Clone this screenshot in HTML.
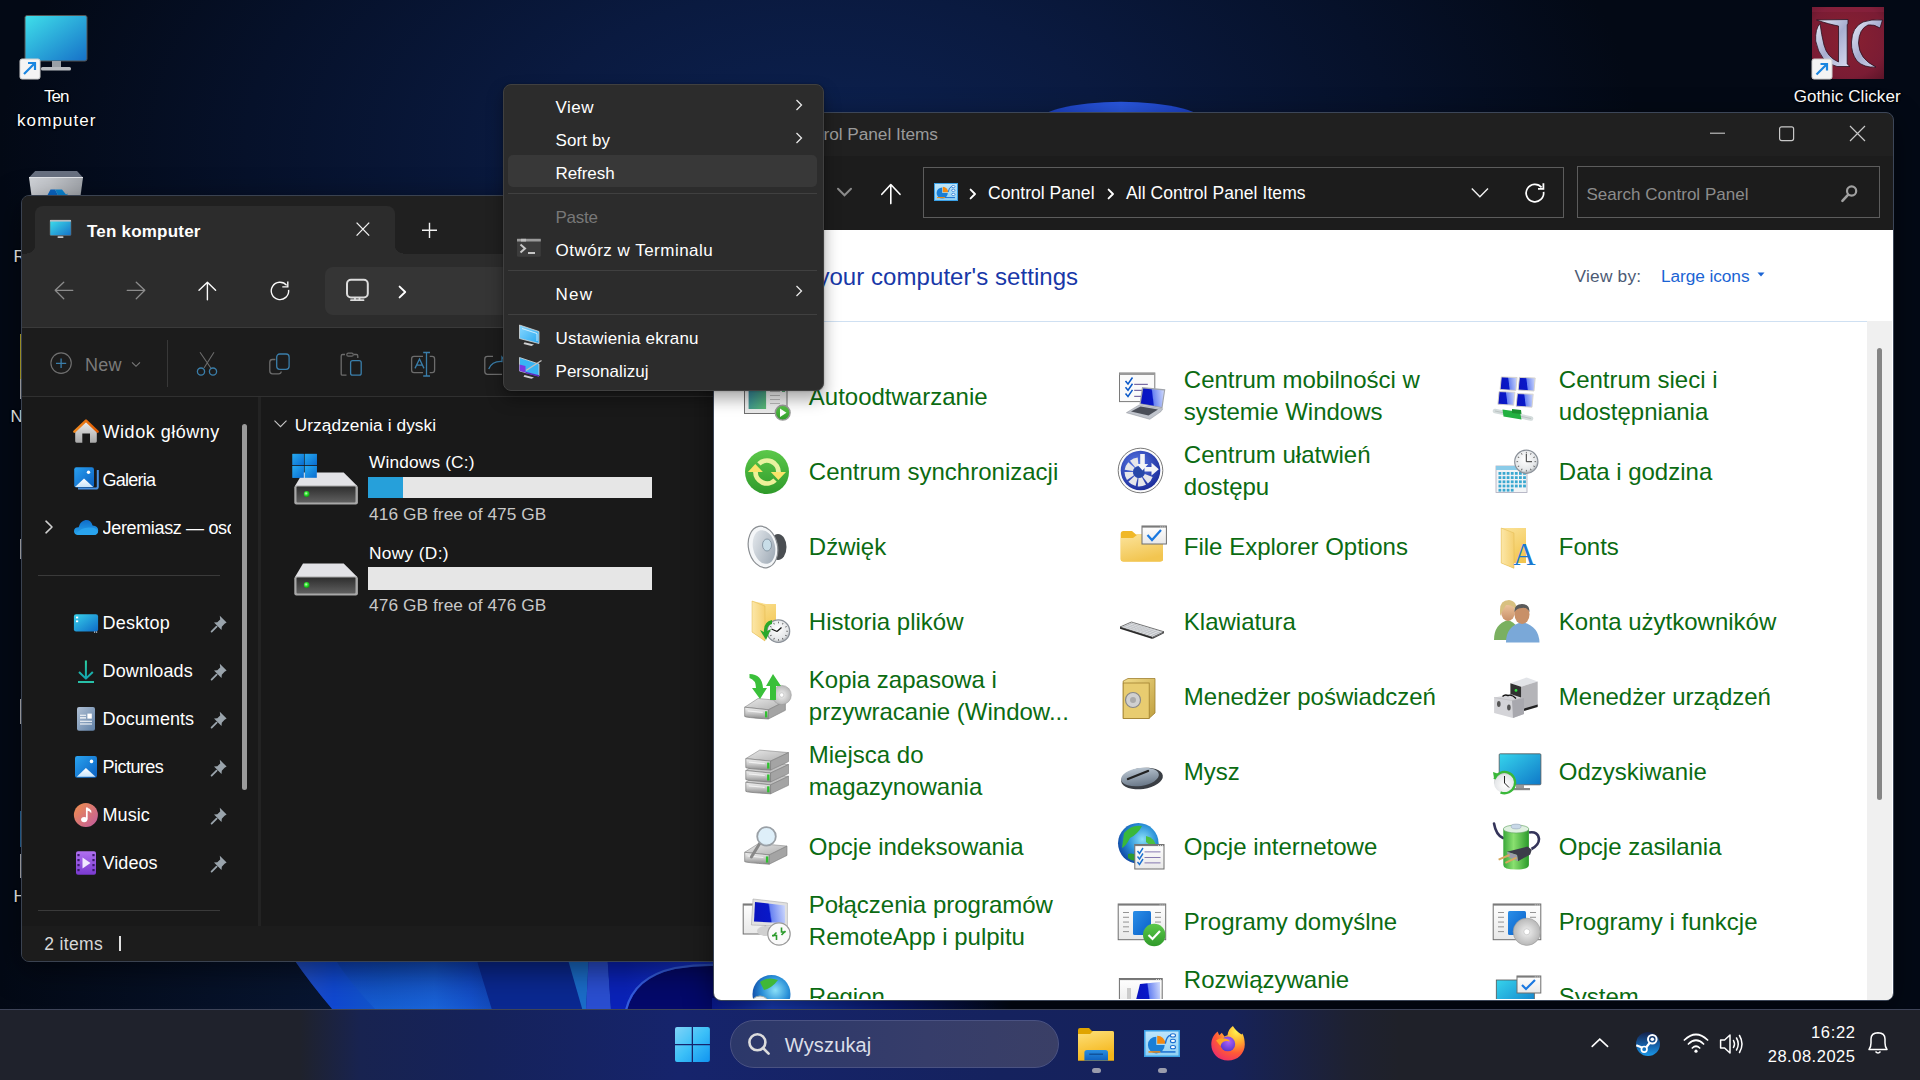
<!DOCTYPE html><html><head><meta charset="utf-8"><style>
*{margin:0;padding:0;box-sizing:border-box}
html,body{width:1920px;height:1080px;overflow:hidden}
body{position:relative;font-family:"Liberation Sans", sans-serif;background:#030915}
.t{position:absolute;line-height:1;white-space:nowrap;font-family:"Liberation Sans", sans-serif}
</style></head><body><div style="position:absolute;left:0px;top:0px;width:1920px;height:1080px;background:radial-gradient(ellipse 820px 460px at 820px 150px,#0c2150 0%,#0a1a40 35%,#06112a 70%,rgba(3,9,21,0) 100%),radial-gradient(ellipse 500px 300px at 500px 1000px,#0a1c40 0%,rgba(3,9,21,0) 100%),#030915"></div>
<svg style="position:absolute;left:280px;top:958px;" width="440" height="52" viewBox="0 0 440 52">
      <defs>
        <linearGradient id="bl1" x1="13" y1="0" x2="215" y2="0" gradientUnits="userSpaceOnUse">
          <stop offset="0" stop-color="#2450c4"/><stop offset="0.2" stop-color="#1048d0"/><stop offset="0.45" stop-color="#1256c8"/><stop offset="0.7" stop-color="#1a62d8"/><stop offset="0.88" stop-color="#1040c0"/><stop offset="1" stop-color="#0a2890"/>
        </linearGradient>
        <linearGradient id="bl2" x1="0" y1="0" x2="0" y2="1"><stop offset="0" stop-color="#0c3aa8"/><stop offset="1" stop-color="#1a66d8"/></linearGradient>
        <linearGradient id="bl3" x1="345" y1="0" x2="440" y2="0" gradientUnits="userSpaceOnUse"><stop offset="0" stop-color="#0a22b8"/><stop offset="1" stop-color="#1838d0"/></linearGradient>
      </defs>
      <path d="M13 0 L440 0 L440 52 L53 52 Q30 25 13 0 Z" fill="#0a2890"/>
      
      <path d="M13 0 L196 0 L212 52 L53 52 Q30 25 13 0 Z" fill="url(#bl1)"/>
      <path d="M54 0 L196 0 L212 52 L96 52 Q70 25 54 0 Z" fill="url(#bl2)" opacity="0.55"/>
      <path d="M287.5 0 L308.75 0 L306 52 L302.5 52 Z" fill="#1a6cc8"/>
      <path d="M308.75 0 L327.5 0 L331 52 L306 52 Z" fill="#2a4ed0"/>
      <path d="M327.5 0 L440 0 L440 52 L331 52 Z" fill="url(#bl3)"/>
      <path d="M347 52 Q355 20 395 11 Q418 7 440 8 L440 52 Z" fill="#04096a"/>
      <path d="M346 52 Q354 19 395 10 Q418 6 440 7" stroke="#3a64e0" stroke-width="2.2" fill="none" opacity="0.9"/>
    </svg>
<div style="position:absolute;left:712px;top:998px;width:300px;height:11px;background:linear-gradient(90deg,#0a1a90 0%,#1a40c0 20%,#0a1a78 60%,rgba(5,10,24,0) 100%)"></div>
<svg style="position:absolute;left:1030px;top:95px;" width="180" height="20" viewBox="0 0 180 20"><defs><linearGradient id="arc" x1="0" y1="0" x2="1" y2="0"><stop offset="0" stop-color="#1a3ec0"/><stop offset="0.5" stop-color="#2a58e0"/><stop offset="1" stop-color="#1a3ec0"/></linearGradient></defs><ellipse cx="91" cy="28.8" rx="86" ry="22" fill="url(#arc)"/></svg>
<svg style="position:absolute;left:18px;top:12px;" width="76" height="70" viewBox="0 0 76 70">
      <defs><linearGradient id="mon" x1="0" y1="0" x2="1" y2="1"><stop offset="0" stop-color="#3fe0ea"/><stop offset="1" stop-color="#1670c8"/></linearGradient></defs>
      <rect x="7" y="3.5" width="62" height="45.5" rx="2" fill="url(#mon)" stroke="#555" stroke-width="1"/>
      <rect x="34" y="49" width="9" height="6" fill="#9aa0a6"/>
      <rect x="23" y="55" width="30" height="3.6" rx="1.5" fill="#b8bcc0"/>
      <rect x="2" y="47" width="20" height="20" rx="2" fill="#f4f4f4" stroke="#cfcfcf"/>
      <path d="M6 62 L17 51 M10 51 L17 51 L17 58" stroke="#1a86e0" stroke-width="2.2" fill="none"/>
    </svg>
<div id="t1" class="t" style="letter-spacing:-0.96px;left:44.0px;top:87.8px;font-size:17px;color:#fff;font-weight:400;text-shadow:0 0 2px #000,0 1px 2px #000">Ten</div>
<div id="t2" class="t" style="letter-spacing:1.09px;left:17.0px;top:112.1px;font-size:17px;color:#fff;font-weight:400;text-shadow:0 0 2px #000,0 1px 2px #000">komputer</div>
<svg style="position:absolute;left:20px;top:160px;" width="80" height="40" viewBox="0 0 80 40">
      <defs><linearGradient id="rb" x1="0" y1="0" x2="1" y2="0"><stop offset="0" stop-color="#d0d3d8"/><stop offset="0.4" stop-color="#c4c7cc"/><stop offset="1" stop-color="#a4a8ae"/></linearGradient></defs>
      <path d="M9 17.5 L15.2 11 L57 11 L63 17.5 Z" fill="#687080"/>
      <path d="M9 17.5 L63 17.5 L60.5 36 L11.5 36 Z" fill="url(#rb)"/>
      <path d="M9 17.5 L63 17.5" stroke="#e4e6ea" stroke-width="1"/>
      <path d="M27 36 L30.5 29.5 L35 29.5 L38.5 36 Z" fill="#0a68c8"/>
      <path d="M35 29.5 L42 29.5 L46 34.5 L48 33.5 L46.5 36 L38.5 36 Z" fill="#0a88d8"/>
    </svg>
<div id="t3" class="t" style="left:13.5px;top:247.8px;font-size:17px;color:#fff;font-weight:400;text-shadow:0 0 2px #000,0 1px 2px #000">R</div>
<div id="t4" class="t" style="left:10.5px;top:407.5px;font-size:17px;color:#fff;font-weight:400;text-shadow:0 0 2px #000,0 1px 2px #000">N</div>
<div id="t5" class="t" style="left:13.5px;top:887.5px;font-size:17px;color:#fff;font-weight:400;text-shadow:0 0 2px #000,0 1px 2px #000">H</div>
<div style="position:absolute;left:20px;top:334px;width:2.5px;height:45px;background:#c8b830"></div>
<div style="position:absolute;left:20px;top:379px;width:2.5px;height:20px;background:#c0c0c4"></div>
<div style="position:absolute;left:20px;top:539px;width:2.5px;height:20px;background:#c0c0c4"></div>
<div style="position:absolute;left:20px;top:699px;width:2.5px;height:25px;background:#c0c0c4"></div>
<div style="position:absolute;left:20px;top:811px;width:2.5px;height:36px;background:#2a70a8"></div>
<div style="position:absolute;left:20px;top:854px;width:2.5px;height:24px;background:#c0c0c4"></div>
<svg style="position:absolute;left:1808px;top:5px;" width="80" height="76" viewBox="0 0 80 76">
      <defs><radialGradient id="gc" cx="0.5" cy="0.45" r="0.75"><stop offset="0" stop-color="#8a2030"/><stop offset="0.7" stop-color="#7a1c34"/><stop offset="1" stop-color="#5a1428"/></radialGradient>
      <linearGradient id="gcs" x1="0" y1="0" x2="1" y2="1"><stop offset="0" stop-color="#e8ecf8"/><stop offset="0.5" stop-color="#a8aed0"/><stop offset="1" stop-color="#d8dcf0"/></linearGradient></defs>
      <rect x="4" y="2" width="72" height="72" fill="url(#gc)"/>
      <rect x="4" y="2" width="72" height="5" fill="#a02a50" opacity="0.25"/>
      <g stroke="#2a1020" stroke-width="0.8" fill="url(#gcs)">
        <path d="M8.5 15 L40 14.5 L40 19 L39.2 19.5 L39.2 59 L42 61.5 L29 61.5 Q12 58 7.7 36 Q7 24 12 18.5 Q13.5 30 16 40 Q19 52 30.5 57 L30.5 21 Q22 19.5 8.5 15 Z"/>
        <path d="M74.5 15 L72 23 Q66 19 60 20 Q51 24 50.5 38 Q51 54 68 62 Q56 63 49 56 Q43 48 43.5 37 Q44 22 55 17 Q63 14 74.5 15 Z"/>
      </g>
      <rect x="4" y="54" width="20" height="20" rx="2" fill="#f4f4f4" stroke="#cfcfcf"/>
      <path d="M8.5 69.5 L19 59 M12.5 59 L19 59 L19 65.5" stroke="#1a86e0" stroke-width="2.2" fill="none"/>
    </svg>
<div id="t6" class="t" style="letter-spacing:0.09px;left:1793.7px;top:88.1px;font-size:17px;color:#fff;font-weight:400;text-shadow:0 0 2px #000,0 1px 2px #000">Gothic Clicker</div>
<div style="position:absolute;left:21px;top:194.5px;width:860px;height:767px;border-radius:8px;background:#202020;border:1px solid #3a4250;overflow:hidden;box-shadow:0 8px 30px rgba(0,0,0,0.5)">
<div style="position:absolute;left:0px;top:-0.5px;width:860px;height:70px;background:#2c2c2c"></div>
<div style="position:absolute;left:0px;top:-0.5px;width:860px;height:58.7px;background:#202020;border-radius:0 0 0 0"></div>
<div style="position:absolute;left:13px;top:10.5px;width:360px;height:60px;background:#2c2c2c;border-radius:8px 8px 0 0"></div>
<div style="position:absolute;left:5px;top:49.5px;width:8px;height:9px;background:radial-gradient(circle at 0 0,#202020 8px,#2c2c2c 8.5px)"></div>
<div style="position:absolute;left:373px;top:49.5px;width:8px;height:9px;background:radial-gradient(circle at 100% 0,#202020 8px,#2c2c2c 8.5px)"></div>
<div style="position:absolute;left:0px;top:58.19999999999999px;width:860px;height:73.5px;background:#2c2c2c"></div>
<div style="position:absolute;left:0px;top:131.3px;width:860px;height:1px;background:#3a3a3a"></div>
<div style="position:absolute;left:303px;top:71.30000000000001px;width:560px;height:48px;background:#353535;border-radius:8px"></div>
<div style="position:absolute;left:0px;top:132.3px;width:860px;height:68.5px;background:#1c1c1c"></div>
<div style="position:absolute;left:0px;top:200.3px;width:860px;height:1.6px;background:#303030"></div>
<div style="position:absolute;left:0px;top:201.5px;width:860px;height:529px;background:#191919"></div>
<div style="position:absolute;left:236px;top:201.5px;width:3px;height:529px;background:#232323"></div>
<div style="position:absolute;left:220px;top:228.5px;width:5px;height:366px;background:#9a9a9a;border-radius:3px"></div>
<div style="position:absolute;left:16px;top:379.0px;width:182px;height:1.2px;background:#3a3a3a"></div>
<div style="position:absolute;left:16px;top:714.5px;width:182px;height:1.2px;background:#3a3a3a"></div>
<div style="position:absolute;left:0px;top:730.3px;width:860px;height:36px;background:#1c1c1c"></div>
<div style="position:absolute;left:97px;top:740.1px;width:2px;height:15px;background:#e0e0e0"></div>
<div style="position:absolute;left:346.3px;top:281.0px;width:283.7px;height:21.7px;background:#e6e6e6"></div>
<div style="position:absolute;left:346.3px;top:281.0px;width:34.7px;height:21.7px;background:#26a0da"></div>
<div style="position:absolute;left:346.3px;top:371.79999999999995px;width:283.7px;height:22.4px;background:#e6e6e6"></div>
</div>
<div id="t7" class="t" style="letter-spacing:0.21px;left:87.0px;top:223.2px;font-size:17px;color:#fff;font-weight:700;">Ten komputer</div>
<div id="t8" class="t" style="letter-spacing:0.52px;left:102.6px;top:422.6px;font-size:18px;color:#fff;font-weight:400;">Widok główny</div>
<div id="t9" class="t" style="letter-spacing:-0.76px;left:102.6px;top:470.6px;font-size:18px;color:#fff;font-weight:400;">Galeria</div>
<div id="t10" class="t" style="left:102.6px;top:518.8px;font-size:18px;color:#fff;font-weight:400;width:128px;overflow:hidden;letter-spacing:-0.35px">Jeremiasz — osc</div>
<div id="t11" class="t" style="letter-spacing:0.18px;left:102.6px;top:614.4px;font-size:18px;color:#fff;font-weight:400;">Desktop</div>
<div id="t12" class="t" style="letter-spacing:0.13px;left:102.6px;top:662.4px;font-size:18px;color:#fff;font-weight:400;">Downloads</div>
<div id="t13" class="t" style="letter-spacing:0.06px;left:102.6px;top:710.4px;font-size:18px;color:#fff;font-weight:400;">Documents</div>
<div id="t14" class="t" style="letter-spacing:-0.55px;left:102.6px;top:758.4px;font-size:18px;color:#fff;font-weight:400;">Pictures</div>
<div id="t15" class="t" style="letter-spacing:0.02px;left:102.6px;top:806.4px;font-size:18px;color:#fff;font-weight:400;">Music</div>
<div id="t16" class="t" style="letter-spacing:0.04px;left:102.6px;top:854.4px;font-size:18px;color:#fff;font-weight:400;">Videos</div>
<div id="t17" class="t" style="letter-spacing:0.07px;left:294.7px;top:416.9px;font-size:17.3px;color:#fff;font-weight:400;">Urządzenia i dyski</div>
<div id="t18" class="t" style="letter-spacing:0.16px;left:369.0px;top:453.6px;font-size:17.3px;color:#fff;font-weight:400;">Windows (C:)</div>
<div id="t19" class="t" style="letter-spacing:0.08px;left:369.0px;top:506.0px;font-size:17.3px;color:#c8c8c8;font-weight:400;">416 GB free of 475 GB</div>
<div id="t20" class="t" style="letter-spacing:0.34px;left:369.0px;top:545.0px;font-size:17.3px;color:#fff;font-weight:400;">Nowy (D:)</div>
<div id="t21" class="t" style="letter-spacing:0.08px;left:369.0px;top:597.4px;font-size:17.3px;color:#c8c8c8;font-weight:400;">476 GB free of 476 GB</div>
<div id="t22" class="t" style="letter-spacing:0.24px;left:84.9px;top:355.5px;font-size:18px;color:#7a7a7a;font-weight:400;">New</div>
<div id="t23" class="t" style="letter-spacing:0.35px;left:44.2px;top:936.2px;font-size:17.5px;color:#d8d8d8;font-weight:400;">2 items</div>
<svg style="position:absolute;left:48px;top:218px;" width="26" height="22" viewBox="0 0 26 22">
      <defs><linearGradient id="tmon" x1="0" y1="0" x2="1" y2="1"><stop offset="0" stop-color="#3ee0ec"/><stop offset="1" stop-color="#1672c8"/></linearGradient></defs>
      <rect x="2" y="2" width="21" height="15.5" rx="1" fill="url(#tmon)" stroke="#6a6a6a" stroke-width="0.6"/>
      <rect x="2" y="2" width="21" height="1.6" fill="#b8bcc0"/>
      <rect x="9.5" y="18.3" width="6" height="1.7" rx="0.8" fill="#c8c8c8"/>
    </svg>
<svg style="position:absolute;left:350px;top:216px;" width="26" height="26" viewBox="0 0 26 26"><path d="M6.6 6.6 L19.2 19.6 M19.2 6.6 L6.6 19.6" stroke="#f2f2f2" stroke-width="1.3" fill="none"/></svg>
<svg style="position:absolute;left:416px;top:216px;" width="28" height="28" viewBox="0 0 28 28"><path d="M13.5 6.8 L13.5 22 M6 14.3 L21 14.3" stroke="#f2f2f2" stroke-width="1.4" fill="none"/></svg>
<svg style="position:absolute;left:50px;top:276px;" width="30" height="30" viewBox="0 0 30 30"><path d="M5.2 14.3 L22.8 14.3 M13.75 6.2 L5.2 14.3 L13.75 22.75" stroke="#8c8c8c" stroke-width="1.3" fill="none" stroke-linecap="round" stroke-linejoin="round"/></svg>
<svg style="position:absolute;left:122px;top:276px;" width="30" height="30" viewBox="0 0 30 30"><path d="M5.2 14.3 L22.8 14.3 M14.25 6.2 L22.8 14.3 L14.25 22.75" stroke="#8c8c8c" stroke-width="1.3" fill="none" stroke-linecap="round" stroke-linejoin="round"/></svg>
<svg style="position:absolute;left:193px;top:276px;" width="30" height="30" viewBox="0 0 30 30"><path d="M14.4 6.4 L14.4 23.7 M6 14.3 L14.4 6.2 L22.6 14.3" stroke="#fafafa" stroke-width="1.4" fill="none" stroke-linecap="round" stroke-linejoin="round"/></svg>
<svg style="position:absolute;left:266px;top:276px;" width="30" height="30" viewBox="0 0 30 30"><path d="M20.7 9.4 A8.7 8.7 0 1 0 22.6 13.9" stroke="#fafafa" stroke-width="1.4" fill="none"/><path d="M16.3 10.9 L21.8 10.9 L21.8 5.4" stroke="#fafafa" stroke-width="1.4" fill="none"/></svg>
<svg style="position:absolute;left:340px;top:274px;" width="36" height="32" viewBox="0 0 36 32">
      <rect x="7" y="5.8" width="20.8" height="17.6" rx="4" stroke="#dcdcdc" stroke-width="2" fill="none"/>
      <path d="M15 23.4 L15 26 M19.5 23.4 L19.5 26" stroke="#dcdcdc" stroke-width="1.8"/>
      <path d="M11 26.2 L23.5 26.2" stroke="#dcdcdc" stroke-width="1.8" stroke-linecap="round"/>
    </svg>
<svg style="position:absolute;left:394px;top:282px;" width="18" height="20" viewBox="0 0 18 20"><path d="M5.6 4.6 L11.2 10 L5.6 15.4" stroke="#fff" stroke-width="1.9" fill="none" stroke-linecap="round" stroke-linejoin="round"/></svg>
<svg style="position:absolute;left:48px;top:350px;" width="28" height="28" viewBox="0 0 28 28"><circle cx="13.1" cy="13.1" r="10.2" stroke="#707070" stroke-width="1.15" fill="none"/><path d="M13.1 8.5 L13.1 18 M8 13.3 L18.2 13.3" stroke="#3a7eaa" stroke-width="1.3"/></svg>
<svg style="position:absolute;left:128px;top:358px;" width="16" height="14" viewBox="0 0 16 14"><path d="M4 4.3 L8 8.3 L12 4.3" stroke="#7a7a7a" stroke-width="1.1" fill="none"/></svg>
<div style="position:absolute;left:166.5px;top:340px;width:1.3px;height:47.4px;background:#383838"></div>
<svg style="position:absolute;left:194px;top:348px;" width="26" height="30" viewBox="0 0 26 30">
      <path d="M6 4.3 L16.8 20 M20 4.3 L10 20" stroke="#6c6c6c" stroke-width="1.1" fill="none"/>
      <circle cx="7" cy="23.6" r="3.6" stroke="#3a7eaa" stroke-width="1.3" fill="none"/>
      <circle cx="19" cy="23.6" r="3.6" stroke="#3a7eaa" stroke-width="1.3" fill="none"/>
    </svg>
<svg style="position:absolute;left:265px;top:350px;" width="30" height="28" viewBox="0 0 30 28">
      <path d="M10.4 9.5 L7.5 9.5 Q4.8 9.5 4.8 12.2 L4.8 21 Q4.8 23.8 7.5 23.8 L13.5 23.8 Q16 23.8 16.3 21.5" stroke="#6c6c6c" stroke-width="1.3" fill="none"/>
      <rect x="11.7" y="4" width="12.4" height="15.3" rx="3" stroke="#3a7eaa" stroke-width="1.3" fill="none"/>
    </svg>
<svg style="position:absolute;left:336px;top:348px;" width="30" height="30" viewBox="0 0 30 30">
      <path d="M9 6.5 L6.5 6.5 Q5.2 6.5 5.2 8 L5.2 26.2 Q5.2 27.2 6.5 27.2 L10.5 27.2 M18 6.5 L20.5 6.5 Q21.8 6.5 21.8 8 L21.8 10" stroke="#6c6c6c" stroke-width="1.3" fill="none"/>
      <rect x="10.8" y="5.2" width="6.5" height="3" rx="1.5" stroke="#6c6c6c" stroke-width="1.2" fill="none"/>
      <rect x="14.6" y="12.6" width="10.6" height="14.6" rx="2" stroke="#3a7eaa" stroke-width="1.3" fill="none"/>
    </svg>
<svg style="position:absolute;left:408px;top:348px;" width="30" height="32" viewBox="0 0 30 32">
      <path d="M15 8.4 L6 8.4 Q3.6 8.4 3.6 11 L3.6 22 Q3.6 24.6 6 24.6 L15 24.6 M21.7 8.4 L24.2 8.4 Q26.6 8.4 26.6 11 L26.6 22 Q26.6 24.6 24.2 24.6 L21.7 24.6" stroke="#6c6c6c" stroke-width="1.3" fill="none"/>
      <path d="M7 20.4 L11.5 11 L16 20.4 M8.6 17.2 L14.4 17.2" stroke="#3a7eaa" stroke-width="1.3" fill="none"/>
      <path d="M18.5 4.5 L18.5 28 M15.2 4.5 L22 4.5 M15.2 28 L22 28" stroke="#3a7eaa" stroke-width="1.3" fill="none"/>
    </svg>
<svg style="position:absolute;left:480px;top:348px;" width="24" height="32" viewBox="0 0 24 32">
      <path d="M13 8.4 L7.5 8.4 Q4.8 8.4 4.8 11 L4.8 23.6 Q4.8 26.3 7.5 26.3 L22 26.3" stroke="#6c6c6c" stroke-width="1.3" fill="none"/>
      <path d="M8.7 21 Q12 13 22 13.5 L22 9 L26 14" stroke="#3a7eaa" stroke-width="1.3" fill="none"/>
    </svg>
<svg style="position:absolute;left:72px;top:418px;" width="28" height="28" viewBox="0 0 28 28">
      <defs><linearGradient id="hb" x1="0" y1="0" x2="0" y2="1"><stop offset="0" stop-color="#ececec"/><stop offset="1" stop-color="#a8a8a8"/></linearGradient>
      <linearGradient id="hr" x1="0" y1="0" x2="1" y2="0"><stop offset="0" stop-color="#f08a20"/><stop offset="1" stop-color="#e05a00"/></linearGradient></defs>
      <path d="M3.2 13.5 L14 3.4 L24.8 13.5 L24.8 23.3 Q24.8 24.7 23.4 24.7 L18 24.7 L18 15.4 L10.3 15.4 L10.3 24.7 L4.6 24.7 Q3.2 24.7 3.2 23.3 Z" fill="url(#hb)"/>
      <path d="M2.4 13.6 L14 2.6 L25.6 13.6" stroke="url(#hr)" stroke-width="2.6" fill="none" stroke-linejoin="round" stroke-linecap="round"/>
    </svg>
<svg style="position:absolute;left:72px;top:465px;" width="28" height="28" viewBox="0 0 28 28">
      <defs><linearGradient id="gal" x1="0" y1="0" x2="1" y2="1"><stop offset="0" stop-color="#29a0f0"/><stop offset="1" stop-color="#0a5ec0"/></linearGradient>
      <linearGradient id="mnt" x1="0" y1="0" x2="0" y2="1"><stop offset="0" stop-color="#ffffff"/><stop offset="1" stop-color="#c8e4fa"/></linearGradient></defs>
      <path d="M6 23.6 L24 23.6 Q25.8 23.6 25.8 21.8 L25.8 5" stroke="#4a90e0" stroke-width="2" fill="none"/>
      <rect x="2.2" y="2.2" width="19.8" height="20.2" rx="2.2" fill="url(#gal)"/>
      <path d="M3 22 L12 13.6 L21.2 22 Z" fill="url(#mnt)"/>
      <circle cx="16.5" cy="7.2" r="1.7" fill="#fff"/>
    </svg>
<svg style="position:absolute;left:72px;top:516px;" width="28" height="22" viewBox="0 0 28 22">
      <defs><linearGradient id="cld" x1="0" y1="0" x2="0" y2="1"><stop offset="0" stop-color="#0f6cc8"/><stop offset="1" stop-color="#28a8f0"/></linearGradient></defs>
      <path d="M6.5 19 Q2 19 2 15.3 Q2 11.3 6.6 11.2 Q8 5.2 13.5 4 Q18.8 3.6 20.6 9.4 Q26.2 9.8 26.2 14.6 Q26.2 19 21.5 19 Z" fill="url(#cld)"/>
      <path d="M4.3 17.5 Q10 10 21 11.8 Q25 12.8 26 15.5 Q25.4 19 21.5 19 L6.5 19 Q4.8 19 4.3 17.5 Z" fill="#2aa4ee" opacity="0.9"/>
    </svg>
<svg style="position:absolute;left:42px;top:518px;" width="14" height="18" viewBox="0 0 14 18"><path d="M4 3.2 L10 9 L4 14.8" stroke="#cfcfcf" stroke-width="1.6" fill="none" stroke-linecap="round" stroke-linejoin="round"/></svg>
<svg style="position:absolute;left:72px;top:612px;" width="28" height="22" viewBox="0 0 28 22">
      <defs><linearGradient id="dsk" x1="0" y1="0" x2="1" y2="1"><stop offset="0" stop-color="#38d0ea"/><stop offset="1" stop-color="#0d6ac6"/></linearGradient></defs>
      <rect x="1.9" y="2.2" width="24.2" height="17.3" rx="2.2" fill="url(#dsk)"/>
      <rect x="4" y="4.6" width="2.2" height="1.8" fill="#fff"/><rect x="4" y="8.4" width="2.2" height="1.8" fill="#fff"/>
      <rect x="22" y="19.5" width="1.2" height="1.2" fill="#cde"/><rect x="24" y="19.5" width="1.2" height="1.2" fill="#cde"/>
    </svg>
<svg style="position:absolute;left:72px;top:656px;" width="28" height="30" viewBox="0 0 28 30">
      <defs><linearGradient id="dl" x1="0" y1="0" x2="0" y2="1"><stop offset="0" stop-color="#2cd0a0"/><stop offset="1" stop-color="#12a4b0"/></linearGradient></defs>
      <path d="M13.9 4.5 L13.9 22 M7 16 L13.9 22.6 L20.8 16" stroke="url(#dl)" stroke-width="2" fill="none" stroke-linejoin="round"/>
      <path d="M6 26 L22 26" stroke="#28c0a8" stroke-width="2"/>
    </svg>
<svg style="position:absolute;left:72px;top:704px;" width="28" height="30" viewBox="0 0 28 30">
      <defs><linearGradient id="doc" x1="0" y1="0" x2="1" y2="1"><stop offset="0" stop-color="#b0c0d4"/><stop offset="1" stop-color="#5f80a6"/></linearGradient></defs>
      <rect x="5" y="3" width="18" height="23.7" rx="2" fill="url(#doc)"/>
      <path d="M8 11.2 L14 11.2 M8 13.9 L14 13.9 M8 17.3 L20 17.3 M8 20 L20 20" stroke="#fff" stroke-width="1.1"/>
      <rect x="15.4" y="9.6" width="4.4" height="5" fill="#fff"/>
    </svg>
<svg style="position:absolute;left:72px;top:752px;" width="28" height="28" viewBox="0 0 28 28">
      <defs><linearGradient id="pic" x1="0" y1="0" x2="1" y2="1"><stop offset="0" stop-color="#2aa4f0"/><stop offset="1" stop-color="#0a5ec0"/></linearGradient></defs>
      <rect x="3" y="4" width="22" height="21.7" rx="2.2" fill="url(#pic)"/>
      <path d="M4.8 24.7 L13.9 16 L23.5 24.7 Z" fill="url(#mnt)"/>
      <circle cx="19.5" cy="9.4" r="1.8" fill="#fff"/>
    </svg>
<svg style="position:absolute;left:72px;top:801px;" width="28" height="28" viewBox="0 0 28 28">
      <defs><linearGradient id="mus" x1="0" y1="0" x2="1" y2="1"><stop offset="0" stop-color="#f0904a"/><stop offset="1" stop-color="#c05aa0"/></linearGradient></defs>
      <circle cx="13.9" cy="14" r="12" fill="url(#mus)"/>
      <path d="M14.8 6.5 L14.8 18.5" stroke="#fff" stroke-width="1.7"/>
      <path d="M14.8 6.5 Q18 7.2 19.3 9.8 L19.3 12.3 Q17.5 9.6 14.8 9.4 Z" fill="#fff"/>
      <ellipse cx="12.2" cy="18.6" rx="3.1" ry="2.7" fill="#fff"/>
    </svg>
<svg style="position:absolute;left:72px;top:848px;" width="28" height="30" viewBox="0 0 28 30">
      <defs><linearGradient id="vid" x1="0" y1="0" x2="0" y2="1"><stop offset="0" stop-color="#b070f0"/><stop offset="1" stop-color="#7a3ad0"/></linearGradient></defs>
      <rect x="4" y="3.2" width="20" height="23.5" rx="2" fill="url(#vid)"/>
      <g fill="#3a1a6a"><rect x="5.4" y="6" width="2.2" height="2.2"/><rect x="5.4" y="11" width="2.2" height="2.2"/><rect x="5.4" y="16" width="2.2" height="2.2"/><rect x="5.4" y="21" width="2.2" height="2.2"/>
      <rect x="20.4" y="6" width="2.2" height="2.2"/><rect x="20.4" y="11" width="2.2" height="2.2"/><rect x="20.4" y="16" width="2.2" height="2.2"/><rect x="20.4" y="21" width="2.2" height="2.2"/></g>
      <path d="M10.5 9.5 L18.5 15 L10.5 20.5 Z" fill="#f0e8ff"/>
    </svg>
<svg style="position:absolute;left:208px;top:613px;" width="22" height="20" viewBox="0 0 22 20">
          <path d="M11.8 2.8 L18.6 9.6 L16.6 10.8 L13.8 13.7 L13.5 17 L6 9.5 L9.3 9.2 L12.2 6.4 Z" fill="#9aa4ac"/>
          <path d="M8.6 13.6 L3.6 18.6" stroke="#9aa4ac" stroke-width="1.8" stroke-linecap="round"/>
        </svg>
<svg style="position:absolute;left:208px;top:661px;" width="22" height="20" viewBox="0 0 22 20">
          <path d="M11.8 2.8 L18.6 9.6 L16.6 10.8 L13.8 13.7 L13.5 17 L6 9.5 L9.3 9.2 L12.2 6.4 Z" fill="#9aa4ac"/>
          <path d="M8.6 13.6 L3.6 18.6" stroke="#9aa4ac" stroke-width="1.8" stroke-linecap="round"/>
        </svg>
<svg style="position:absolute;left:208px;top:709px;" width="22" height="20" viewBox="0 0 22 20">
          <path d="M11.8 2.8 L18.6 9.6 L16.6 10.8 L13.8 13.7 L13.5 17 L6 9.5 L9.3 9.2 L12.2 6.4 Z" fill="#9aa4ac"/>
          <path d="M8.6 13.6 L3.6 18.6" stroke="#9aa4ac" stroke-width="1.8" stroke-linecap="round"/>
        </svg>
<svg style="position:absolute;left:208px;top:757px;" width="22" height="20" viewBox="0 0 22 20">
          <path d="M11.8 2.8 L18.6 9.6 L16.6 10.8 L13.8 13.7 L13.5 17 L6 9.5 L9.3 9.2 L12.2 6.4 Z" fill="#9aa4ac"/>
          <path d="M8.6 13.6 L3.6 18.6" stroke="#9aa4ac" stroke-width="1.8" stroke-linecap="round"/>
        </svg>
<svg style="position:absolute;left:208px;top:805px;" width="22" height="20" viewBox="0 0 22 20">
          <path d="M11.8 2.8 L18.6 9.6 L16.6 10.8 L13.8 13.7 L13.5 17 L6 9.5 L9.3 9.2 L12.2 6.4 Z" fill="#9aa4ac"/>
          <path d="M8.6 13.6 L3.6 18.6" stroke="#9aa4ac" stroke-width="1.8" stroke-linecap="round"/>
        </svg>
<svg style="position:absolute;left:208px;top:853px;" width="22" height="20" viewBox="0 0 22 20">
          <path d="M11.8 2.8 L18.6 9.6 L16.6 10.8 L13.8 13.7 L13.5 17 L6 9.5 L9.3 9.2 L12.2 6.4 Z" fill="#9aa4ac"/>
          <path d="M8.6 13.6 L3.6 18.6" stroke="#9aa4ac" stroke-width="1.8" stroke-linecap="round"/>
        </svg>
<svg style="position:absolute;left:270px;top:416px;" width="20" height="16" viewBox="0 0 20 16"><path d="M4.5 4.6 L10.5 10.6 L16.5 4.6" stroke="#c8c8c8" stroke-width="1.1" fill="none"/></svg>
<svg style="position:absolute;left:290px;top:452px;" width="30" height="28" viewBox="0 0 30 28">
      <defs><linearGradient id="wl" x1="0" y1="0" x2="1" y2="1"><stop offset="0" stop-color="#26aaf0"/><stop offset="1" stop-color="#0a6cd0"/></linearGradient></defs>
      <rect x="2.5" y="1.9" width="11.3" height="11.2" fill="url(#wl)"/><rect x="14.8" y="1.9" width="12" height="11.2" fill="url(#wl)"/>
      <rect x="2.5" y="14" width="11.3" height="11.8" fill="url(#wl)"/><rect x="14.8" y="14" width="12" height="11.8" fill="url(#wl)"/>
    </svg>
<svg style="position:absolute;left:286px;top:472px;" width="80" height="34" viewBox="0 0 80 34">
      <defs>
        <linearGradient id="dfront472" x1="0" y1="0" x2="0" y2="1"><stop offset="0" stop-color="#2e2e2e"/><stop offset="1" stop-color="#606060"/></linearGradient>
        <radialGradient id="led472" cx="0.4" cy="0.4" r="0.6"><stop offset="0" stop-color="#c8ffc0"/><stop offset="0.5" stop-color="#30e030"/><stop offset="1" stop-color="#10a010"/></radialGradient>
      </defs>
      <path d="M9 14 L17 0.4 L57.7 0.4 L71.3 14 Z" fill="#e2e2e6"/>
      <rect x="8.3" y="13.6" width="63.6" height="19" rx="2" fill="#a8a8a8"/>
      <rect x="10.5" y="14.6" width="59" height="16" rx="1" fill="url(#dfront472)"/>
      <circle cx="20.7" cy="22" r="2.9" fill="url(#led472)"/>
    </svg>
<svg style="position:absolute;left:286px;top:563px;" width="80" height="34" viewBox="0 0 80 34">
      <defs>
        <linearGradient id="dfront563" x1="0" y1="0" x2="0" y2="1"><stop offset="0" stop-color="#2e2e2e"/><stop offset="1" stop-color="#606060"/></linearGradient>
        <radialGradient id="led563" cx="0.4" cy="0.4" r="0.6"><stop offset="0" stop-color="#c8ffc0"/><stop offset="0.5" stop-color="#30e030"/><stop offset="1" stop-color="#10a010"/></radialGradient>
      </defs>
      <path d="M9 14 L17 0.4 L57.7 0.4 L71.3 14 Z" fill="#e2e2e6"/>
      <rect x="8.3" y="13.6" width="63.6" height="19" rx="2" fill="#a8a8a8"/>
      <rect x="10.5" y="14.6" width="59" height="16" rx="1" fill="url(#dfront563)"/>
      <circle cx="20.7" cy="22" r="2.9" fill="url(#led563)"/>
    </svg>
<svg style="position:absolute;left:290px;top:452px;" width="30" height="28" viewBox="0 0 30 28">
      <rect x="2.5" y="1.9" width="11.3" height="11.2" fill="url(#wl)"/><rect x="14.8" y="1.9" width="12" height="11.2" fill="url(#wl)"/>
      <rect x="2.5" y="14" width="11.3" height="11.8" fill="url(#wl)"/><rect x="14.8" y="14" width="12" height="11.8" fill="url(#wl)"/>
    </svg>
<div style="position:absolute;left:712.5px;top:111.5px;width:1181px;height:889px;border-radius:8px;border:1px solid #3c4658;background:#202020;overflow:hidden;box-shadow:0 8px 30px rgba(0,0,0,0.45)">
<div style="position:absolute;left:0.0px;top:43.30000000000001px;width:1180px;height:74px;background:#1c1c1c"></div>
<div style="position:absolute;left:209.0px;top:54.099999999999994px;width:641px;height:51.6px;border:1px solid #5c5c5c;background:#1c1c1c"></div>
<div style="position:absolute;left:863.0px;top:53.69999999999999px;width:303.3px;height:52px;border:1px solid #5c5c5c;background:#1c1c1c"></div>
<div style="position:absolute;left:0.0px;top:117.1px;width:1180px;height:771px;background:#fff"></div>
<div style="position:absolute;left:0.0px;top:208.0px;width:1154px;height:1.3px;background:#cfe0f2"></div>
<div style="position:absolute;left:1153.9px;top:208.5px;width:25px;height:680px;background:#f0f0f0"></div>
<div style="position:absolute;left:1163.7px;top:235.5px;width:5px;height:452px;background:#858585;border-radius:3px"></div>
</div>
<svg style="position:absolute;left:1705px;top:125px;" width="26" height="18" viewBox="0 0 26 18"><path d="M5 8.2 L20 8.2" stroke="#c8c8c8" stroke-width="1.1"/></svg>
<svg style="position:absolute;left:1775px;top:122px;" width="24" height="24" viewBox="0 0 24 24"><rect x="4.6" y="4.8" width="14" height="13.8" rx="2" stroke="#c8c8c8" stroke-width="1.2" fill="none"/></svg>
<svg style="position:absolute;left:1845px;top:121px;" width="26" height="26" viewBox="0 0 26 26"><path d="M5 5 L20 20 M20 5 L5 20" stroke="#c8c8c8" stroke-width="1.2" fill="none"/></svg>
<svg style="position:absolute;left:834px;top:184px;" width="20" height="16" viewBox="0 0 20 16"><path d="M4 4.8 L10.5 11.3 L17 4.8" stroke="#8a8a8a" stroke-width="2" fill="none" stroke-linecap="round"/></svg>
<svg style="position:absolute;left:876px;top:180px;" width="30" height="28" viewBox="0 0 30 28"><path d="M14.8 5 L14.8 23.6 M5.8 14.3 L14.8 4.5 L24 14.3" stroke="#fff" stroke-width="1.6" fill="none" stroke-linecap="round" stroke-linejoin="round"/></svg>
<svg style="position:absolute;left:934px;top:183px;" width="24" height="18" viewBox="0 0 24 18">
  <defs><linearGradient id="cpbga" x1="0" y1="0" x2="0" y2="1"><stop offset="0" stop-color="#bfe6fb"/><stop offset="1" stop-color="#8fd0f4"/></linearGradient></defs>
  <rect x="0.5" y="0.5" width="23" height="17" fill="url(#cpbga)" stroke="#3aa0e6" stroke-width="1"/>
  <path d="M8.2 4.4 A5.6 5.6 0 1 0 13.8 10 L8.2 10 Z" fill="#1a7ed6"/>
  <path d="M8.8 3.8 A5.4 5.4 0 0 1 14.2 9.2 L8.8 9.2 Z" fill="#f28a12"/>
  <path d="M14.2 9 Q15.2 4 17.5 3.6 L18.5 3.6" stroke="#1a6ed0" stroke-width="0.9" fill="none"/>
  <ellipse cx="19.3" cy="3.6" rx="1.7" ry="1.1" fill="#fff" stroke="#1a6ed0" stroke-width="0.7"/>
  <ellipse cx="19.3" cy="7.3" rx="1.7" ry="1.1" fill="#fff" stroke="#1a6ed0" stroke-width="0.7"/>
  <ellipse cx="19.3" cy="11.4" rx="1.7" ry="1.1" fill="#fff" stroke="#1a6ed0" stroke-width="0.7"/>
  <path d="M3 14.6 L11 14.6" stroke="#f28a12" stroke-width="1"/><path d="M11 14.6 L21 14.6" stroke="#1a6ed0" stroke-width="1"/>
</svg>
<svg style="position:absolute;left:966px;top:186px;" width="14" height="16" viewBox="0 0 14 16"><path d="M4.6 3.6 L9 8 L4.6 12.4" stroke="#fff" stroke-width="1.9" fill="none" stroke-linecap="round" stroke-linejoin="round"/></svg>
<svg style="position:absolute;left:1104px;top:186px;" width="14" height="16" viewBox="0 0 14 16"><path d="M4.6 3.6 L9 8 L4.6 12.4" stroke="#fff" stroke-width="1.9" fill="none" stroke-linecap="round" stroke-linejoin="round"/></svg>
<svg style="position:absolute;left:1468px;top:184px;" width="24" height="20" viewBox="0 0 24 20"><path d="M3.8 4.4 L11.9 12.8 L20 4.4" stroke="#f0f0f0" stroke-width="1.4" fill="none"/></svg>
<svg style="position:absolute;left:1520px;top:178px;" width="30" height="30" viewBox="0 0 30 30"><path d="M21.6 9.4 A8.75 8.75 0 1 0 23.6 13.9" stroke="#fff" stroke-width="1.7" fill="none"/><path d="M18 10.8 L23.4 10.8 L23.4 5.3" stroke="#fff" stroke-width="1.8" fill="none"/></svg>
<svg style="position:absolute;left:1838px;top:182px;" width="24" height="24" viewBox="0 0 24 24"><circle cx="13.6" cy="9" r="4.6" stroke="#a0a0a0" stroke-width="2.2" fill="none"/><path d="M10.2 12.6 L4.4 18.8" stroke="#a0a0a0" stroke-width="2.6" stroke-linecap="round"/></svg>
<svg style="position:absolute;left:1754px;top:268px;" width="14" height="12" viewBox="0 0 14 12"><path d="M3.5 4.5 L10.5 4.5 L7 8.5 Z" fill="#1b64d4"/></svg>
<div id="t24" class="t" style="letter-spacing:-0.06px;left:763.5px;top:125.9px;font-size:17.3px;color:#9a9a9a;font-weight:400;">All Control Panel Items</div>
<div id="t25" class="t" style="letter-spacing:0.04px;left:988.0px;top:184.8px;font-size:17.5px;color:#fff;font-weight:400;">Control Panel</div>
<div id="t26" class="t" style="letter-spacing:0.07px;left:1126.0px;top:184.8px;font-size:17.5px;color:#fff;font-weight:400;">All Control Panel Items</div>
<div id="t27" class="t" style="letter-spacing:0.02px;left:1586.5px;top:185.8px;font-size:17px;color:#8c8c8c;font-weight:400;">Search Control Panel</div>
<div id="t28" class="t" style="letter-spacing:0.06px;left:743.6px;top:264.8px;font-size:24px;color:#1838a8;font-weight:400;">Adjust your computer's settings</div>
<div id="t29" class="t" style="letter-spacing:0.21px;left:1574.6px;top:267.8px;font-size:17.3px;color:#4c5a74;font-weight:400;">View by:</div>
<div id="t30" class="t" style="letter-spacing:-0.08px;left:1661.0px;top:267.8px;font-size:17.3px;color:#1b64d4;font-weight:400;">Large icons</div>
<div style="position:absolute;left:714px;top:322px;width:1153px;height:677px;overflow:hidden">
<div id="t31" class="t" style="left:94.8px;top:62.6px;font-size:24px;color:#0b6b12;font-weight:400;">Autoodtwarzanie</div>
<div id="t32" class="t" style="left:469.8px;top:46.2px;font-size:24px;color:#0b6b12;font-weight:400;">Centrum mobilności w</div>
<div id="t33" class="t" style="left:469.8px;top:78.4px;font-size:24px;color:#0b6b12;font-weight:400;">systemie Windows</div>
<div id="t34" class="t" style="left:844.8px;top:46.2px;font-size:24px;color:#0b6b12;font-weight:400;">Centrum sieci i</div>
<div id="t35" class="t" style="left:844.8px;top:78.4px;font-size:24px;color:#0b6b12;font-weight:400;">udostępniania</div>
<div id="t36" class="t" style="left:94.8px;top:137.6px;font-size:24px;color:#0b6b12;font-weight:400;">Centrum synchronizacji</div>
<div id="t37" class="t" style="left:469.8px;top:121.2px;font-size:24px;color:#0b6b12;font-weight:400;">Centrum ułatwień</div>
<div id="t38" class="t" style="left:469.8px;top:153.4px;font-size:24px;color:#0b6b12;font-weight:400;">dostępu</div>
<div id="t39" class="t" style="left:844.8px;top:137.6px;font-size:24px;color:#0b6b12;font-weight:400;">Data i godzina</div>
<div id="t40" class="t" style="left:94.8px;top:212.6px;font-size:24px;color:#0b6b12;font-weight:400;">Dźwięk</div>
<div id="t41" class="t" style="left:469.8px;top:212.6px;font-size:24px;color:#0b6b12;font-weight:400;">File Explorer Options</div>
<div id="t42" class="t" style="left:844.8px;top:212.6px;font-size:24px;color:#0b6b12;font-weight:400;">Fonts</div>
<div id="t43" class="t" style="left:94.8px;top:287.6px;font-size:24px;color:#0b6b12;font-weight:400;">Historia plików</div>
<div id="t44" class="t" style="left:469.8px;top:287.6px;font-size:24px;color:#0b6b12;font-weight:400;">Klawiatura</div>
<div id="t45" class="t" style="left:844.8px;top:287.6px;font-size:24px;color:#0b6b12;font-weight:400;">Konta użytkowników</div>
<div id="t46" class="t" style="left:94.8px;top:346.2px;font-size:24px;color:#0b6b12;font-weight:400;">Kopia zapasowa i</div>
<div id="t47" class="t" style="left:94.8px;top:378.4px;font-size:24px;color:#0b6b12;font-weight:400;">przywracanie (Window...</div>
<div id="t48" class="t" style="left:469.8px;top:362.6px;font-size:24px;color:#0b6b12;font-weight:400;">Menedżer poświadczeń</div>
<div id="t49" class="t" style="left:844.8px;top:362.6px;font-size:24px;color:#0b6b12;font-weight:400;">Menedżer urządzeń</div>
<div id="t50" class="t" style="left:94.8px;top:421.2px;font-size:24px;color:#0b6b12;font-weight:400;">Miejsca do</div>
<div id="t51" class="t" style="left:94.8px;top:453.4px;font-size:24px;color:#0b6b12;font-weight:400;">magazynowania</div>
<div id="t52" class="t" style="left:469.8px;top:437.6px;font-size:24px;color:#0b6b12;font-weight:400;">Mysz</div>
<div id="t53" class="t" style="left:844.8px;top:437.6px;font-size:24px;color:#0b6b12;font-weight:400;">Odzyskiwanie</div>
<div id="t54" class="t" style="left:94.8px;top:512.6px;font-size:24px;color:#0b6b12;font-weight:400;">Opcje indeksowania</div>
<div id="t55" class="t" style="left:469.8px;top:512.6px;font-size:24px;color:#0b6b12;font-weight:400;">Opcje internetowe</div>
<div id="t56" class="t" style="left:844.8px;top:512.6px;font-size:24px;color:#0b6b12;font-weight:400;">Opcje zasilania</div>
<div id="t57" class="t" style="left:94.8px;top:571.2px;font-size:24px;color:#0b6b12;font-weight:400;">Połączenia programów</div>
<div id="t58" class="t" style="left:94.8px;top:603.4px;font-size:24px;color:#0b6b12;font-weight:400;">RemoteApp i pulpitu</div>
<div id="t59" class="t" style="left:469.8px;top:587.6px;font-size:24px;color:#0b6b12;font-weight:400;">Programy domyślne</div>
<div id="t60" class="t" style="left:844.8px;top:587.6px;font-size:24px;color:#0b6b12;font-weight:400;">Programy i funkcje</div>
<div id="t61" class="t" style="left:94.8px;top:662.6px;font-size:24px;color:#0b6b12;font-weight:400;">Region</div>
<div id="t62" class="t" style="left:469.8px;top:646.2px;font-size:24px;color:#0b6b12;font-weight:400;">Rozwiązywanie</div>
<div id="t63" class="t" style="left:469.8px;top:678.4px;font-size:24px;color:#0b6b12;font-weight:400;">problemów</div>
<div id="t64" class="t" style="left:844.8px;top:662.6px;font-size:24px;color:#0b6b12;font-weight:400;">System</div>
<svg style="position:absolute;left:0;top:0" width="1153" height="677" viewBox="714 322 1153 677">
<defs>
 <linearGradient id="gGreen" x1="0" y1="0" x2="0" y2="1"><stop offset="0" stop-color="#5cc84a"/><stop offset="1" stop-color="#2f9a2a"/></linearGradient>
 <linearGradient id="gYel" x1="0" y1="0" x2="1" y2="1"><stop offset="0" stop-color="#f4f0a0"/><stop offset="1" stop-color="#f8d840"/></linearGradient>
 <linearGradient id="gFold" x1="0" y1="0" x2="0.4" y2="1"><stop offset="0" stop-color="#fbe39a"/><stop offset="1" stop-color="#f2c550"/></linearGradient>
 <linearGradient id="gFoldF" x1="0" y1="0" x2="1" y2="0"><stop offset="0" stop-color="#fce7a8"/><stop offset="1" stop-color="#f5d070"/></linearGradient>
 <linearGradient id="gDrive" x1="0" y1="0" x2="0" y2="1"><stop offset="0" stop-color="#f2f2f2"/><stop offset="0.5" stop-color="#c8c8c8"/><stop offset="1" stop-color="#8a8a8a"/></linearGradient>
 <linearGradient id="gDriveT" x1="0" y1="0" x2="1" y2="1"><stop offset="0" stop-color="#e8e8e8"/><stop offset="1" stop-color="#b0b0b0"/></linearGradient>
 <radialGradient id="gClock" cx="0.45" cy="0.4" r="0.6"><stop offset="0" stop-color="#ffffff"/><stop offset="0.8" stop-color="#e4e6e8"/><stop offset="1" stop-color="#a8acb0"/></radialGradient>
 <linearGradient id="gScreen" x1="0" y1="0.1" x2="1" y2="0"><stop offset="0" stop-color="#0a14c0"/><stop offset="0.45" stop-color="#0818c8"/><stop offset="0.5" stop-color="#6a84f2"/><stop offset="1" stop-color="#d0dafc"/></linearGradient>
 <radialGradient id="gGlobe" cx="0.6" cy="0.4" r="0.7"><stop offset="0" stop-color="#8ae0f8"/><stop offset="0.5" stop-color="#2a90d8"/><stop offset="1" stop-color="#0a3a9a"/></radialGradient>
 <linearGradient id="gTeal" x1="0" y1="0" x2="1" y2="1"><stop offset="0" stop-color="#36d4ec"/><stop offset="1" stop-color="#0f78c8"/></linearGradient>
 <linearGradient id="gWin" x1="0" y1="0" x2="0" y2="1"><stop offset="0" stop-color="#ffffff"/><stop offset="1" stop-color="#e8e8e8"/></linearGradient>
 <linearGradient id="gBlueR" x1="0" y1="0" x2="1" y2="1"><stop offset="0" stop-color="#2a8ee8"/><stop offset="1" stop-color="#0a60c8"/></linearGradient>
 <radialGradient id="gEase" cx="0.4" cy="0.35" r="0.7"><stop offset="0" stop-color="#5a7ae8"/><stop offset="1" stop-color="#1a2a98"/></radialGradient>
 <linearGradient id="gGold" x1="0" y1="0" x2="1" y2="1"><stop offset="0" stop-color="#f2dc8a"/><stop offset="1" stop-color="#c0a040"/></linearGradient>
 <linearGradient id="gMouse" x1="0" y1="0" x2="0" y2="1"><stop offset="0" stop-color="#b8c4d0"/><stop offset="1" stop-color="#6a7888"/></linearGradient>
 <radialGradient id="gCD" cx="0.5" cy="0.5" r="0.5"><stop offset="0" stop-color="#f8f8f8"/><stop offset="0.3" stop-color="#e0e0e0"/><stop offset="1" stop-color="#b8b8b8"/></radialGradient>
 <linearGradient id="gBatt" x1="0" y1="0" x2="1" y2="0"><stop offset="0" stop-color="#3aa83a"/><stop offset="0.4" stop-color="#8ae070"/><stop offset="1" stop-color="#2a9a2a"/></linearGradient>
 <linearGradient id="gSkin" x1="0" y1="0" x2="0" y2="1"><stop offset="0" stop-color="#f0c8a0"/><stop offset="1" stop-color="#c89068"/></linearGradient>
 <linearGradient id="gSpk" x1="0" y1="0" x2="1" y2="1"><stop offset="0" stop-color="#e8ecf0"/><stop offset="1" stop-color="#98a4b0"/></linearGradient>
</defs>
<rect x="744.5" y="376" width="42.5" height="37.5" fill="url(#gWin)" stroke="#6e6e6e" stroke-width="1"/><rect x="744.5" y="376" width="42.5" height="1.6" fill="#7a7a7a"/><rect x="781.0" y="376.5" width="0.8" height="0.8" fill="#fff"/><rect x="783.0" y="376.5" width="0.8" height="0.8" fill="#fff"/><rect x="785.0" y="376.5" width="0.8" height="0.8" fill="#fff"/><defs><linearGradient id="gAuto" x1="0" y1="0" x2="1" y2="1"><stop offset="0" stop-color="#2a7aa8"/><stop offset="1" stop-color="#5ab870"/></linearGradient></defs><rect x="748.6" y="380" width="17.5" height="29" fill="url(#gAuto)"/><rect x="770" y="383" width="10" height="1" fill="#b8b8b8"/><rect x="770" y="387" width="10" height="1" fill="#b8b8b8"/><rect x="770" y="391" width="10" height="1" fill="#b8b8b8"/><rect x="770" y="395" width="10" height="1" fill="#b8b8b8"/><rect x="770" y="399" width="10" height="1" fill="#b8b8b8"/><rect x="770" y="403" width="10" height="1" fill="#b8b8b8"/><rect x="782" y="380" width="3" height="12" fill="#5ab07a"/><circle cx="782.7" cy="412.7" r="7.4" fill="url(#gGreen)" stroke="#9a9a9a" stroke-width="1.4"/><path d="M780 408.5 L786.5 412.7 L780 417 Z" fill="#fff"/><circle cx="767" cy="472" r="22" fill="url(#gGreen)"/><path d="M758.9 463.9 A11.5 11.5 0 0 1 778.5 472.5" stroke="#e8f2a0" stroke-width="4.8" fill="none"/><path d="M775.1 480.1 A11.5 11.5 0 0 1 755.5 471.5" stroke="#eef098" stroke-width="4.8" fill="none"/><path d="M770.8 472 L786 472 L778.4 479.9 Z" fill="#fae46a"/><path d="M747.9 472 L762.9 472 L755.3 464.1 Z" fill="#fae46a"/><ellipse cx="778" cy="547" rx="8.5" ry="13" fill="#4a4e52"/><ellipse cx="763" cy="547" rx="14.5" ry="21" fill="#f4f6f8" stroke="#8a8e92" stroke-width="1.2" transform="rotate(-12 763 547)"/><ellipse cx="764" cy="547" rx="11" ry="17" fill="url(#gSpk)" transform="rotate(-12 764 547)"/><ellipse cx="767" cy="545" rx="4.5" ry="6" fill="#c8dde8" stroke="#7a8a98" stroke-width="0.8"/><path d="M752 601 L766 604 L776 604 L776 633 L765 633 L765 641 L752 632 Z" fill="url(#gFold)"/><path d="M752 601 L765 606 L765 641 L752 632 Z" fill="url(#gFoldF)" stroke="#e0b850" stroke-width="0.5"/><circle cx="778.4" cy="631.2" r="11.3" fill="url(#gClock)" stroke="#8a9098" stroke-width="1.2"/><rect x="778.0" y="621.7" width="0.8" height="1.6" fill="#555" transform="rotate(0 778.4 631.2)"/><rect x="778.0" y="621.7" width="0.8" height="1.6" fill="#555" transform="rotate(30 778.4 631.2)"/><rect x="778.0" y="621.7" width="0.8" height="1.6" fill="#555" transform="rotate(60 778.4 631.2)"/><rect x="778.0" y="621.7" width="0.8" height="1.6" fill="#555" transform="rotate(90 778.4 631.2)"/><rect x="778.0" y="621.7" width="0.8" height="1.6" fill="#555" transform="rotate(120 778.4 631.2)"/><rect x="778.0" y="621.7" width="0.8" height="1.6" fill="#555" transform="rotate(150 778.4 631.2)"/><rect x="778.0" y="621.7" width="0.8" height="1.6" fill="#555" transform="rotate(180 778.4 631.2)"/><rect x="778.0" y="621.7" width="0.8" height="1.6" fill="#555" transform="rotate(210 778.4 631.2)"/><rect x="778.0" y="621.7" width="0.8" height="1.6" fill="#555" transform="rotate(240 778.4 631.2)"/><rect x="778.0" y="621.7" width="0.8" height="1.6" fill="#555" transform="rotate(270 778.4 631.2)"/><rect x="778.0" y="621.7" width="0.8" height="1.6" fill="#555" transform="rotate(300 778.4 631.2)"/><rect x="778.0" y="621.7" width="0.8" height="1.6" fill="#555" transform="rotate(330 778.4 631.2)"/><path d="M777 631.5 L781.5 627.5 M777 631.5 L771.5 629" stroke="#111" stroke-width="1.2"/><path d="M772 620 Q763 622 764 632 L760 630 L766 640 L771 629 L767 631 Q767 625 772 624 Z" fill="#2aa82a"/><path d="M744.7 707.2 L758.0 698.5 L785.4 701.1 L768.4 709.8 Z" fill="url(#gDriveT)" stroke="#8a8a8a" stroke-width="0.6"/><path d="M744.7 707.2 L768.4 709.8 L768.4 719.0 Q744.7 717.5 744.7 716.4 Z" fill="url(#gDrive)" stroke="#7a7a7a" stroke-width="0.7"/><path d="M768.4 709.8 L785.4 701.1 L785.4 710.3 L768.4 719.0 Z" fill="#a4a4a4" stroke="#7a7a7a" stroke-width="0.6"/><path d="M747.6 710.8 L762.7 712.3" stroke="#f8f8f8" stroke-width="1.2" opacity="0.8"/><rect x="765.0" y="711.3" width="2.3" height="6.1" fill="#30c030"/><circle cx="781.7" cy="695" r="9.6" fill="url(#gCD)" stroke="#9a9a9a" stroke-width="0.6"/><circle cx="781.7" cy="695" r="2.2" fill="#fff" stroke="#aaa" stroke-width="0.5"/><path d="M749.5 674 Q762 674 763 688 L767 688 L760 699 L752 688 L756 688 Q756 680 749.5 678 Z" fill="#3ac03a"/><path d="M770 700 L770 686 L766 686 L773 674 L781 686 L776 686 L776 700 Z" fill="#3ac03a"/><path d="M745.8 782.3 L759.7 773.8 L788.5 776.3 L770.6 784.8 Z" fill="url(#gDriveT)" stroke="#8a8a8a" stroke-width="0.6"/><path d="M745.8 782.3 L770.6 784.8 L770.6 793.8 Q745.8 792.3 745.8 791.3 Z" fill="url(#gDrive)" stroke="#7a7a7a" stroke-width="0.7"/><path d="M770.6 784.8 L788.5 776.3 L788.5 785.3 L770.6 793.8 Z" fill="#a4a4a4" stroke="#7a7a7a" stroke-width="0.6"/><path d="M748.8 785.8 L764.7 787.3" stroke="#f8f8f8" stroke-width="1.2" opacity="0.8"/><rect x="767.1" y="786.3" width="2.4" height="6.0" fill="#30c030"/><path d="M745.8 770.5 L759.7 762.0 L788.5 764.5 L770.6 773.0 Z" fill="url(#gDriveT)" stroke="#8a8a8a" stroke-width="0.6"/><path d="M745.8 770.5 L770.6 773.0 L770.6 782.0 Q745.8 780.5 745.8 779.5 Z" fill="url(#gDrive)" stroke="#7a7a7a" stroke-width="0.7"/><path d="M770.6 773.0 L788.5 764.5 L788.5 773.5 L770.6 782.0 Z" fill="#a4a4a4" stroke="#7a7a7a" stroke-width="0.6"/><path d="M748.8 774.0 L764.7 775.5" stroke="#f8f8f8" stroke-width="1.2" opacity="0.8"/><rect x="767.1" y="774.5" width="2.4" height="6.0" fill="#30c030"/><path d="M745.8 758.6 L759.7 750.1 L788.5 752.6 L770.6 761.1 Z" fill="url(#gDriveT)" stroke="#8a8a8a" stroke-width="0.6"/><path d="M745.8 758.6 L770.6 761.1 L770.6 770.1 Q745.8 768.6 745.8 767.6 Z" fill="url(#gDrive)" stroke="#7a7a7a" stroke-width="0.7"/><path d="M770.6 761.1 L788.5 752.6 L788.5 761.6 L770.6 770.1 Z" fill="#a4a4a4" stroke="#7a7a7a" stroke-width="0.6"/><path d="M748.8 762.1 L764.7 763.6" stroke="#f8f8f8" stroke-width="1.2" opacity="0.8"/><rect x="767.1" y="762.6" width="2.4" height="6.0" fill="#30c030"/><path d="M744.7 852.3 L758.5 843.5 L787.0 846.1 L769.3 854.9 Z" fill="url(#gDriveT)" stroke="#8a8a8a" stroke-width="0.6"/><path d="M744.7 852.3 L769.3 854.9 L769.3 864.2 Q744.7 862.6 744.7 861.6 Z" fill="url(#gDrive)" stroke="#7a7a7a" stroke-width="0.7"/><path d="M769.3 854.9 L787.0 846.1 L787.0 855.4 L769.3 864.2 Z" fill="#a4a4a4" stroke="#7a7a7a" stroke-width="0.6"/><path d="M747.6 855.9 L763.4 857.5" stroke="#f8f8f8" stroke-width="1.2" opacity="0.8"/><rect x="765.9" y="856.4" width="2.4" height="6.2" fill="#30c030"/><path d="M760 843 L751.4 857" stroke="#888" stroke-width="3" stroke-linecap="round"/><circle cx="766.5" cy="836.4" r="9.3" fill="#d8ecf8" fill-opacity="0.85" stroke="#9aa0a6" stroke-width="1.8"/><rect x="743.2" y="904" width="22" height="30" fill="url(#gWin)" stroke="#6e6e6e" stroke-width="1"/><rect x="743.2" y="904" width="22" height="1.6" fill="#7a7a7a"/><rect x="759.2" y="904.5" width="0.8" height="0.8" fill="#fff"/><rect x="761.2" y="904.5" width="0.8" height="0.8" fill="#fff"/><rect x="763.2" y="904.5" width="0.8" height="0.8" fill="#fff"/><path d="M753 899 L787.4 903 L787.4 926.3 L751.4 925 Z" fill="#e0e0e0" stroke="#aaa" stroke-width="0.6"/><path d="M755 902 L785 905.5 L785 923 L754 921.5 Z" fill="url(#gScreen)"/><ellipse cx="766" cy="931" rx="9" ry="5" fill="#d0d0d0"/><circle cx="779" cy="934" r="11.2" fill="#fafafa" stroke="#9a9a9a" stroke-width="1.2"/><path d="M772.5 936.5 L776.5 932.5 M772 935.5 L776.5 935.5 L776.5 940 M785.5 931 L781.5 935 M785.5 932 L781.5 932 L781.5 927.5" stroke="#2a9a2a" stroke-width="1.6" fill="none"/><circle cx="771.5" cy="994" r="19" fill="url(#gGlobe)"/><path d="M760 982 Q768 976 778 980 Q772 988 764 990 Z" fill="#40b838"/><circle cx="760" cy="1006" r="10" fill="url(#gClock)" stroke="#9aa" stroke-width="1"/><rect x="1119.5" y="373" width="35.3" height="28.6" fill="#fafafa" stroke="#7a7a7a" stroke-width="1"/><rect x="1119.5" y="373" width="35.3" height="2" fill="#9a9a9a"/><path d="M1125.5 381.0 L1128 384.0 L1132.5 377.5" stroke="#0a58c8" stroke-width="1.5" fill="none"/><rect x="1134.2" y="383.8" width="13.6" height="1.1" fill="#6a5a9a"/><path d="M1125.5 387.2 L1128 390.2 L1132.5 383.7" stroke="#0a58c8" stroke-width="1.5" fill="none"/><rect x="1134.2" y="389.8" width="13.6" height="1.1" fill="#6a5a9a"/><path d="M1125.5 393.4 L1128 396.4 L1132.5 389.9" stroke="#0a58c8" stroke-width="1.5" fill="none"/><rect x="1134.2" y="395.8" width="13.6" height="1.1" fill="#6a5a9a"/><path d="M1142 387.1 L1165.3 389.3 L1162.5 408.2 L1139.5 404.3 Z" fill="#a0a4ac"/><path d="M1143.2 388.4 L1164 390.4 L1161.5 407 L1140.8 403.5 Z" fill="url(#gScreen)"/><path d="M1126.4 412.7 L1139.2 404.9 L1162.8 408.8 L1160.9 411.6 L1149.8 419.3 Z" fill="#c0c4cc" stroke="#8a8e96" stroke-width="0.5"/><path d="M1131 411.5 L1140.5 406.5 L1158 409.5 L1148.5 415.5 Z" fill="#4a4e58"/><circle cx="1140.5" cy="470.5" r="22.3" fill="#fbfbfb" stroke="#7a7a7a" stroke-width="1"/><circle cx="1140.5" cy="470.5" r="19.8" fill="url(#gEase)"/><path d="M1138.1 461.7 A10.3 10.3 0 1 0 1148.7 475.5" stroke="#e6e6ea" stroke-width="8.4" fill="none" stroke-dasharray="6 1.6"/><circle cx="1139" cy="472" r="5.8" fill="#2848a8"/><path d="M1140.2 454 L1144.8 454 L1144.8 464 L1148.2 464 L1142.5 470.6 L1136.8 464 L1140.2 464 Z" fill="#f4f4f6"/><path d="M1144.5 467 L1151.5 467 L1151.5 462.8 L1158.8 469.2 L1151.5 475.6 L1151.5 471.6 L1144.5 471.6 Z" fill="#f4f4f6"/><path d="M1120.7 534 Q1120.7 531 1123.5 531 L1132 531 L1136 534.5 L1160 534.5 Q1163 534.5 1163 537.5 L1163 559 Q1163 561.5 1160 561.5 L1123.5 561.5 Q1120.7 561.5 1120.7 559 Z" fill="#f0b828"/><path d="M1120.7 538 L1133 538 L1137 535 L1160 535 Q1163 535 1163 538 L1163 559 Q1163 561.5 1160 561.5 L1123.5 561.5 Q1120.7 561.5 1120.7 559 Z" fill="url(#gFold)"/><rect x="1142" y="526" width="24.4" height="18" fill="url(#gWin)" stroke="#6e6e6e" stroke-width="1"/><rect x="1142" y="526" width="24.4" height="1.6" fill="#7a7a7a"/><rect x="1160.4" y="526.5" width="0.8" height="0.8" fill="#fff"/><rect x="1162.4" y="526.5" width="0.8" height="0.8" fill="#fff"/><rect x="1164.4" y="526.5" width="0.8" height="0.8" fill="#fff"/><path d="M1147.5 535 L1152 540 L1161 530" stroke="#1a78e0" stroke-width="2.2" fill="none"/><path d="M1120 627 L1131.4 622 L1164 631.8 L1152.5 637.2 Z" fill="#eceef0" stroke="#3a3a3a" stroke-width="0.7"/><path d="M1120 627 L1152.5 637.2 L1152.5 639 L1120 628.8 Z" fill="#2a2a2a"/><path d="M1152.5 637.2 L1164 631.8 L1164 633.3 L1152.5 639 Z" fill="#4a4a4a"/><path d="M1123.0 626.3 L1155.5 636.5" stroke="#a0a4aa" stroke-width="0.5"/><path d="M1125.3 625.3 L1157.8 635.5" stroke="#a0a4aa" stroke-width="0.5"/><path d="M1127.6 624.3 L1160.1 634.5" stroke="#a0a4aa" stroke-width="0.5"/><path d="M1129.9 623.3 L1162.4 633.5" stroke="#a0a4aa" stroke-width="0.5"/><path d="M1124.0 627.0 L1134.0 622.6" stroke="#a0a4aa" stroke-width="0.45"/><path d="M1127.4 628.1 L1137.4 623.7" stroke="#a0a4aa" stroke-width="0.45"/><path d="M1130.8 629.1 L1140.8 624.7" stroke="#a0a4aa" stroke-width="0.45"/><path d="M1134.2 630.2 L1144.2 625.8" stroke="#a0a4aa" stroke-width="0.45"/><path d="M1137.6 631.2 L1147.6 626.8" stroke="#a0a4aa" stroke-width="0.45"/><path d="M1141.0 632.3 L1151.0 627.9" stroke="#a0a4aa" stroke-width="0.45"/><path d="M1144.4 633.4 L1154.4 629.0" stroke="#a0a4aa" stroke-width="0.45"/><path d="M1147.8 634.4 L1157.8 630.0" stroke="#a0a4aa" stroke-width="0.45"/><path d="M1151.2 635.5 L1161.2 631.1" stroke="#a0a4aa" stroke-width="0.45"/><path d="M1123.2 681 L1128 678.5 L1155 678.5 L1155 713 L1149 718.4 L1123.2 718.4 Z" fill="url(#gGold)" stroke="#a08030" stroke-width="0.8"/><rect x="1123.2" y="683" width="26" height="35.4" fill="#e8cc70" stroke="#a08030" stroke-width="0.8"/><circle cx="1133" cy="700" r="7.5" fill="#d0d0d0" stroke="#888" stroke-width="1.2"/><circle cx="1133" cy="700" r="3" fill="#aaa"/><ellipse cx="1142" cy="778.5" rx="21" ry="10.5" fill="#3a3e44" transform="rotate(-8 1142 778.5)"/><ellipse cx="1140" cy="777" rx="19" ry="9" fill="url(#gMouse)" transform="rotate(-8 1140 777)"/><path d="M1128 779 L1148 771" stroke="#222" stroke-width="2.4" stroke-linecap="round"/><circle cx="1138.3" cy="843.3" r="20.3" fill="url(#gGlobe)"/><path d="M1124 833 Q1132 824 1142 826 Q1138 834 1130 838 Q1126 846 1122 848 Z" fill="#3ab83a"/><path d="M1146 836 Q1156 838 1156 848 Q1150 846 1146 842 Z" fill="#4ac040"/><path d="M1128 854 Q1136 852 1140 860 Q1132 862 1128 858 Z" fill="#2a9a30"/><rect x="1134.8" y="844.5" width="29.2" height="24.5" fill="url(#gWin)" stroke="#6e6e6e" stroke-width="1"/><rect x="1134.8" y="844.5" width="29.2" height="1.6" fill="#7a7a7a"/><rect x="1158.0" y="845.0" width="0.8" height="0.8" fill="#fff"/><rect x="1160.0" y="845.0" width="0.8" height="0.8" fill="#fff"/><rect x="1162.0" y="845.0" width="0.8" height="0.8" fill="#fff"/><path d="M1137.5 851.0 L1139.5 853.5 L1143 848.0" stroke="#1a70d0" stroke-width="1.4" fill="none"/><rect x="1144.5" y="851.5" width="16" height="0.8" fill="#6a5aa0"/><path d="M1137.5 856.5 L1139.5 859.0 L1143 853.5" stroke="#1a70d0" stroke-width="1.4" fill="none"/><rect x="1144.5" y="857.0" width="16" height="0.8" fill="#6a5aa0"/><path d="M1137.5 862.0 L1139.5 864.5 L1143 859.0" stroke="#1a70d0" stroke-width="1.4" fill="none"/><rect x="1144.5" y="862.5" width="16" height="0.8" fill="#6a5aa0"/><rect x="1118.2" y="904" width="47.5" height="35.7" fill="url(#gWin)" stroke="#6e6e6e" stroke-width="1"/><rect x="1118.2" y="904" width="47.5" height="1.6" fill="#7a7a7a"/><rect x="1159.7" y="904.5" width="0.8" height="0.8" fill="#fff"/><rect x="1161.7" y="904.5" width="0.8" height="0.8" fill="#fff"/><rect x="1163.7" y="904.5" width="0.8" height="0.8" fill="#fff"/><rect x="1123" y="912.0" width="6" height="0.9" fill="#888"/><rect x="1155" y="912.0" width="6" height="0.9" fill="#888"/><rect x="1123" y="916.8" width="6" height="0.9" fill="#888"/><rect x="1155" y="916.8" width="6" height="0.9" fill="#888"/><rect x="1123" y="921.6" width="6" height="0.9" fill="#888"/><rect x="1155" y="921.6" width="6" height="0.9" fill="#888"/><rect x="1123" y="926.4" width="6" height="0.9" fill="#888"/><rect x="1155" y="926.4" width="6" height="0.9" fill="#888"/><rect x="1123" y="931.2" width="6" height="0.9" fill="#888"/><rect x="1155" y="931.2" width="6" height="0.9" fill="#888"/><rect x="1133" y="911" width="18" height="24" rx="1.5" fill="url(#gBlueR)"/><circle cx="1154.2" cy="935" r="11.2" fill="url(#gGreen)"/><path d="M1148.5 935 L1152.5 939 L1160 931" stroke="#fff" stroke-width="2.2" fill="none"/><rect x="1119.4" y="978.5" width="42.8" height="30" fill="url(#gWin)" stroke="#6e6e6e" stroke-width="1"/><rect x="1119.4" y="978.5" width="42.8" height="1.6" fill="#7a7a7a"/><rect x="1156.2" y="979.0" width="0.8" height="0.8" fill="#fff"/><rect x="1158.2" y="979.0" width="0.8" height="0.8" fill="#fff"/><rect x="1160.2" y="979.0" width="0.8" height="0.8" fill="#fff"/><path d="M1140 984 L1160 982 L1160 1000 L1136 1000 Z" fill="url(#gScreen)"/><rect x="1127" y="988" width="4" height="14" fill="#ccc"/><path d="M1501.3 376.9 L1517.1 377.5 L1515.8999999999999 390.5 L1500.1 389.5 Z" fill="url(#gScreen)" stroke="#d8d4c8" stroke-width="0.9"/><path d="M1519.4 377.4 L1535.2 378.0 L1534.0 391.0 L1518.2 390.0 Z" fill="url(#gScreen)" stroke="#d8d4c8" stroke-width="0.9"/><path d="M1499.1 391.6 L1514.8999999999999 392.20000000000005 L1513.6999999999998 405.20000000000005 L1497.8999999999999 404.20000000000005 Z" fill="url(#gScreen)" stroke="#d8d4c8" stroke-width="0.9"/><path d="M1517.4 393.6 L1533.2 394.20000000000005 L1532.0 407.20000000000005 L1516.2 406.20000000000005 Z" fill="url(#gScreen)" stroke="#d8d4c8" stroke-width="0.9"/><path d="M1495 411 L1531 418.5" stroke="#d4dcdc" stroke-width="4.6" stroke-linecap="round"/><path d="M1495 411 L1531 418.5" stroke="#a0a8a8" stroke-width="0.5"/><path d="M1502.5 409.6 L1520 412 L1521.5 419.5 L1503.5 416.6 Z" fill="#22b040"/><path d="M1512 409 L1521 410 L1521.5 414 L1512 413 Z" fill="#1a9030"/><rect x="1496" y="466" width="31" height="26.5" fill="#f2f4f6" stroke="#aab" stroke-width="0.8"/><rect x="1496" y="466" width="31" height="4" fill="#8acbe8"/><rect x="1498.5" y="472.0" width="2.8" height="2.8" fill="#3aa8d0"/><rect x="1502.6" y="472.0" width="2.8" height="2.8" fill="#3aa8d0"/><rect x="1506.7" y="472.0" width="2.8" height="2.8" fill="#3aa8d0"/><rect x="1510.8" y="472.0" width="2.8" height="2.8" fill="#3aa8d0"/><rect x="1514.9" y="472.0" width="2.8" height="2.8" fill="#3aa8d0"/><rect x="1519.0" y="472.0" width="2.8" height="2.8" fill="#3aa8d0"/><rect x="1523.1" y="472.0" width="2.8" height="2.8" fill="#3aa8d0"/><rect x="1498.5" y="476.2" width="2.8" height="2.8" fill="#3aa8d0"/><rect x="1502.6" y="476.2" width="2.8" height="2.8" fill="#3aa8d0"/><rect x="1506.7" y="476.2" width="2.8" height="2.8" fill="#3aa8d0"/><rect x="1510.8" y="476.2" width="2.8" height="2.8" fill="#3aa8d0"/><rect x="1514.9" y="476.2" width="2.8" height="2.8" fill="#3aa8d0"/><rect x="1519.0" y="476.2" width="2.8" height="2.8" fill="#3aa8d0"/><rect x="1523.1" y="476.2" width="2.8" height="2.8" fill="#3aa8d0"/><rect x="1498.5" y="480.4" width="2.8" height="2.8" fill="#3aa8d0"/><rect x="1502.6" y="480.4" width="2.8" height="2.8" fill="#3aa8d0"/><rect x="1506.7" y="480.4" width="2.8" height="2.8" fill="#3aa8d0"/><rect x="1510.8" y="480.4" width="2.8" height="2.8" fill="#3aa8d0"/><rect x="1514.9" y="480.4" width="2.8" height="2.8" fill="#3aa8d0"/><rect x="1519.0" y="480.4" width="2.8" height="2.8" fill="#3aa8d0"/><rect x="1523.1" y="480.4" width="2.8" height="2.8" fill="#3aa8d0"/><rect x="1498.5" y="484.6" width="2.8" height="2.8" fill="#3aa8d0"/><rect x="1502.6" y="484.6" width="2.8" height="2.8" fill="#3aa8d0"/><rect x="1506.7" y="484.6" width="2.8" height="2.8" fill="#3aa8d0"/><rect x="1510.8" y="484.6" width="2.8" height="2.8" fill="#3aa8d0"/><rect x="1514.9" y="484.6" width="2.8" height="2.8" fill="#3aa8d0"/><rect x="1519.0" y="484.6" width="2.8" height="2.8" fill="#3aa8d0"/><rect x="1523.1" y="484.6" width="2.8" height="2.8" fill="#3aa8d0"/><rect x="1498.5" y="488.8" width="2.8" height="2.8" fill="#3aa8d0"/><rect x="1502.6" y="488.8" width="2.8" height="2.8" fill="#3aa8d0"/><rect x="1506.7" y="488.8" width="2.8" height="2.8" fill="#3aa8d0"/><rect x="1510.8" y="488.8" width="2.8" height="2.8" fill="#3aa8d0"/><circle cx="1526.3" cy="461.7" r="11.6" fill="url(#gClock)" stroke="#8a9098" stroke-width="1.2"/><rect x="1525.9" y="451.9" width="0.8" height="1.6" fill="#555" transform="rotate(0 1526.3 461.7)"/><rect x="1525.9" y="451.9" width="0.8" height="1.6" fill="#555" transform="rotate(30 1526.3 461.7)"/><rect x="1525.9" y="451.9" width="0.8" height="1.6" fill="#555" transform="rotate(60 1526.3 461.7)"/><rect x="1525.9" y="451.9" width="0.8" height="1.6" fill="#555" transform="rotate(90 1526.3 461.7)"/><rect x="1525.9" y="451.9" width="0.8" height="1.6" fill="#555" transform="rotate(120 1526.3 461.7)"/><rect x="1525.9" y="451.9" width="0.8" height="1.6" fill="#555" transform="rotate(150 1526.3 461.7)"/><rect x="1525.9" y="451.9" width="0.8" height="1.6" fill="#555" transform="rotate(180 1526.3 461.7)"/><rect x="1525.9" y="451.9" width="0.8" height="1.6" fill="#555" transform="rotate(210 1526.3 461.7)"/><rect x="1525.9" y="451.9" width="0.8" height="1.6" fill="#555" transform="rotate(240 1526.3 461.7)"/><rect x="1525.9" y="451.9" width="0.8" height="1.6" fill="#555" transform="rotate(270 1526.3 461.7)"/><rect x="1525.9" y="451.9" width="0.8" height="1.6" fill="#555" transform="rotate(300 1526.3 461.7)"/><rect x="1525.9" y="451.9" width="0.8" height="1.6" fill="#555" transform="rotate(330 1526.3 461.7)"/><path d="M1526.3 461.7 L1526.3 454 M1526.3 461.7 L1532 461.7" stroke="#333" stroke-width="1"/><path d="M1501.2 528 L1526 528 L1526 563 L1514 563 L1514 568.3 L1501.2 563 Z" fill="url(#gFold)"/><path d="M1501.2 528 L1514 533 L1514 568.3 L1501.2 563 Z" fill="url(#gFoldF)" stroke="#e0b850" stroke-width="0.5"/><text x="1524.5" y="565" text-anchor="middle" font-family="Liberation Serif" font-size="31" font-weight="400" fill="#1a78d0">A</text><path d="M1494 640 Q1494 624 1508 620 Q1520 624 1520 640 Z" fill="#7ab060"/><ellipse cx="1508" cy="612" rx="7" ry="9" fill="url(#gSkin)"/><path d="M1500 610 Q1500 600 1509 600 Q1518 601 1516 612 Q1514 604 1506 605 Q1502 612 1500 616 Z" fill="#d8c080"/><path d="M1506 642.5 Q1506 626 1522 622 Q1539 626 1539.5 642.5 Z" fill="#7aa8d8"/><ellipse cx="1522" cy="614.5" rx="7.5" ry="9.5" fill="#c89068"/><path d="M1514.5 612 Q1514 604 1522 604 Q1530 604 1529.5 612 Q1527 607 1522 608 Q1517 608 1514.5 612 Z" fill="#5a5a5a"/><path d="M1510.4 683.2 L1526.7 677.4 L1537.7 681.5 L1521.1 686.8 Z" fill="#e2e4e8"/><path d="M1521.1 686.8 L1537.7 681.5 L1537.7 705.7 L1521.1 712 Z" fill="#b4b4b8"/><path d="M1510.4 683.2 L1521.1 686.8 L1521.1 700.6 L1510.4 700 Z" fill="#303030"/><circle cx="1516" cy="690.4" r="1.4" fill="#30e040"/><path d="M1523.7 708.7 L1537.7 704.6 L1537.7 706.9 L1523.7 711 Z" fill="#222"/><path d="M1494.1 697.5 L1512 694.5 L1524 698.5 L1524 714 L1513 718 L1494.1 713 Z" fill="#d4d4d8"/><path d="M1512 700.5 L1524 697.5 L1524 714 L1513 718 Z" fill="#a8a8ae"/><path d="M1494.1 697.5 L1512 700.5 L1524 697.5" stroke="#b8b8bc" stroke-width="0.6" fill="none"/><path d="M1502.5 696.5 Q1505 694 1508 695.5 Q1512 694 1516 698.5" stroke="#111" stroke-width="1.4" fill="none"/><ellipse cx="1498.8" cy="704" rx="1.8" ry="3" fill="#555"/><ellipse cx="1508.9" cy="707.5" rx="1.8" ry="3" fill="#555"/><rect x="1499.2" y="753.8" width="41.7" height="31" rx="1" fill="url(#gTeal)" stroke="#555" stroke-width="0.8"/><rect x="1516" y="784.8" width="8" height="4" fill="#999"/><rect x="1510" y="788" width="20" height="2.2" fill="#888"/><circle cx="1504.5" cy="782.6" r="10.6" fill="url(#gClock)" stroke="#3ab83a" stroke-width="2.3" stroke-dasharray="50 16" transform="rotate(200 1504.5 782.6)"/><path d="M1504.5 776 L1504.5 783 L1509 787.5" stroke="#222" stroke-width="1" fill="none"/><path d="M1493 772 L1494 778 L1499 774 Z" fill="#3ab83a"/><path d="M1494 823.5 Q1496 835 1503 838" stroke="#34345a" stroke-width="2.6" fill="none" stroke-linecap="round"/><path d="M1503.3 829 L1503.3 865 Q1503.3 869.5 1516 869.5 Q1528.9 869.5 1528.9 865 L1528.9 829 Z" fill="url(#gBatt)"/><ellipse cx="1516.1" cy="829" rx="12.8" ry="4" fill="#dff0e0" stroke="#5aa05a" stroke-width="0.6"/><ellipse cx="1516.1" cy="826.5" rx="5" ry="2.4" fill="#c8d8e8" stroke="#8a9ab0" stroke-width="0.5"/><path d="M1529 832.5 Q1538 831 1539 839 Q1539 845 1531.5 849" stroke="#34345a" stroke-width="2.6" fill="none"/><path d="M1507 851.8 L1527.6 846.5 L1531.8 849.7 L1530.2 854.4 L1518 861.3 L1517 855 Z" fill="#3c3c4a"/><path d="M1507 851.8 L1517 855 L1518 861.3 L1508 857 Z" fill="#9a9aaa"/><path d="M1498.6 859.7 L1509.6 855 M1505.4 862.9 L1516.5 857.6" stroke="#d8a860" stroke-width="2"/><rect x="1493.2" y="904" width="47.6" height="35.7" fill="url(#gWin)" stroke="#6e6e6e" stroke-width="1"/><rect x="1493.2" y="904" width="47.6" height="1.6" fill="#7a7a7a"/><rect x="1534.8" y="904.5" width="0.8" height="0.8" fill="#fff"/><rect x="1536.8" y="904.5" width="0.8" height="0.8" fill="#fff"/><rect x="1538.8" y="904.5" width="0.8" height="0.8" fill="#fff"/><rect x="1498" y="912.0" width="6" height="0.9" fill="#888"/><rect x="1530" y="912.0" width="6" height="0.9" fill="#888"/><rect x="1498" y="916.8" width="6" height="0.9" fill="#888"/><rect x="1530" y="916.8" width="6" height="0.9" fill="#888"/><rect x="1498" y="921.6" width="6" height="0.9" fill="#888"/><rect x="1530" y="921.6" width="6" height="0.9" fill="#888"/><rect x="1498" y="926.4" width="6" height="0.9" fill="#888"/><rect x="1530" y="926.4" width="6" height="0.9" fill="#888"/><rect x="1498" y="931.2" width="6" height="0.9" fill="#888"/><rect x="1530" y="931.2" width="6" height="0.9" fill="#888"/><rect x="1508" y="911" width="18" height="24" rx="1.5" fill="url(#gBlueR)"/><circle cx="1526.8" cy="931.8" r="13.6" fill="url(#gCD)" stroke="#9a9a9a" stroke-width="0.6"/><circle cx="1526.8" cy="931.8" r="3" fill="#fff" stroke="#bbb" stroke-width="0.6"/><rect x="1496.3" y="980" width="38" height="30" fill="url(#gTeal)" stroke="#555" stroke-width="0.8"/><rect x="1517" y="976" width="23.8" height="17" fill="url(#gWin)" stroke="#6e6e6e" stroke-width="1"/><rect x="1517" y="976" width="23.8" height="1.6" fill="#7a7a7a"/><rect x="1534.8" y="976.5" width="0.8" height="0.8" fill="#fff"/><rect x="1536.8" y="976.5" width="0.8" height="0.8" fill="#fff"/><rect x="1538.8" y="976.5" width="0.8" height="0.8" fill="#fff"/><path d="M1522 985 L1526 989 L1535 980" stroke="#1a78e0" stroke-width="2.2" fill="none"/></svg>
</div>
<div style="position:absolute;left:502.5px;top:83.5px;width:321px;height:307px;border-radius:8px;background:#2c2c2c;border:1px solid #404040;box-shadow:0 8px 16px rgba(0,0,0,0.35),0 0 2px rgba(0,0,0,0.3)">
<div style="position:absolute;left:4.5px;top:70.80000000000001px;width:309.4px;height:32.1px;background:#383838;border-radius:5px"></div>
<div style="position:absolute;left:4.5px;top:108.69999999999999px;width:309.4px;height:1px;background:#404040"></div>
<div style="position:absolute;left:4.5px;top:185.10000000000002px;width:309.4px;height:1px;background:#404040"></div>
<div style="position:absolute;left:4.5px;top:229.10000000000002px;width:309.4px;height:1px;background:#404040"></div>
</div>
<div id="t65" class="t" style="letter-spacing:0.52px;left:555.5px;top:99.3px;font-size:17px;color:#fff;font-weight:400;">View</div>
<div id="t66" class="t" style="letter-spacing:0.11px;left:555.5px;top:132.3px;font-size:17px;color:#fff;font-weight:400;">Sort by</div>
<div id="t67" class="t" style="letter-spacing:-0.07px;left:555.5px;top:165.3px;font-size:17px;color:#fff;font-weight:400;">Refresh</div>
<div id="t68" class="t" style="letter-spacing:-0.25px;left:555.5px;top:209.3px;font-size:17px;color:#787878;font-weight:400;">Paste</div>
<div id="t69" class="t" style="letter-spacing:0.49px;left:555.5px;top:242.3px;font-size:17px;color:#fff;font-weight:400;">Otwórz w Terminalu</div>
<div id="t70" class="t" style="letter-spacing:1.24px;left:555.5px;top:285.8px;font-size:17px;color:#fff;font-weight:400;">New</div>
<div id="t71" class="t" style="letter-spacing:0.20px;left:555.5px;top:329.8px;font-size:17px;color:#fff;font-weight:400;">Ustawienia ekranu</div>
<div id="t72" class="t" style="letter-spacing:0.04px;left:555.5px;top:362.5px;font-size:17px;color:#fff;font-weight:400;">Personalizuj</div>
<svg style="position:absolute;left:793px;top:97.6px;" width="12" height="14" viewBox="0 0 12 14"><path d="M3.5 2 L8.5 7 L3.5 12" stroke="#e8e8e8" stroke-width="1.3" fill="none"/></svg>
<svg style="position:absolute;left:793px;top:130.5px;" width="12" height="14" viewBox="0 0 12 14"><path d="M3.5 2 L8.5 7 L3.5 12" stroke="#e8e8e8" stroke-width="1.3" fill="none"/></svg>
<svg style="position:absolute;left:793px;top:284px;" width="12" height="14" viewBox="0 0 12 14"><path d="M3.5 2 L8.5 7 L3.5 12" stroke="#e8e8e8" stroke-width="1.3" fill="none"/></svg>
<svg style="position:absolute;left:516px;top:238px;" width="26" height="20" viewBox="0 0 26 20">
      <rect x="1" y="0.8" width="23.8" height="17.9" rx="1.5" fill="#3c3c3c"/>
      <rect x="1" y="0.8" width="23.8" height="2.7" fill="#9a9a9a"/>
      <rect x="5" y="0.8" width="5" height="2.7" fill="#bdbdbd"/>
      <path d="M4.5 6.6 L9 10.4 L4.5 14.4" stroke="#c8c8c8" stroke-width="2" fill="none"/>
      <path d="M12 15 L19 15" stroke="#e8e8e8" stroke-width="1.6"/>
    </svg>
<svg style="position:absolute;left:516px;top:323px;" width="26" height="24" viewBox="0 0 26 24">
      <defs><linearGradient id="dsp" x1="0" y1="0" x2="1" y2="1"><stop offset="0" stop-color="#8ad8ff"/><stop offset="1" stop-color="#28a8f0"/></linearGradient></defs>
      <path d="M3.5 2 L23 8.5 L23 20.5 L3.5 15.5 Z" fill="url(#dsp)" stroke="#d8d8d8" stroke-width="0.8"/>
      <path d="M6 5.5 L21 10.5 L21 18" stroke="#e8f6ff" stroke-width="0.8" fill="none"/>
      <path d="M8.5 19.2 L18 21.6 L15.5 23 L7.5 21 Z" fill="#d0d0d0"/>
    </svg>
<svg style="position:absolute;left:516px;top:355px;" width="28" height="26" viewBox="0 0 28 26">
      <path d="M3.5 2.5 L23 9 L23 21 L3.5 16 Z" fill="#38b4f4" stroke="#d8d8d8" stroke-width="0.8"/>
      <path d="M3.5 9.5 L9.5 11 L9.5 17.5 L3.5 16 Z" fill="#7a38e0"/>
      <path d="M9.5 17.5 L23 21" stroke="#5a28c0" stroke-width="1.5"/>
      <path d="M10 15.5 L25.5 5.5" stroke="#c0c0c0" stroke-width="1.4"/>
      <path d="M8.5 20 L18 22.4 L15.5 23.8 L7.5 21.8 Z" fill="#d0d0d0"/>
    </svg>
<div style="position:absolute;left:0px;top:1008.5px;width:1920px;height:71.5px;background:linear-gradient(90deg,#1f222c 0px,#1f222c 300px,#182350 360px,#15225a 480px,#16246c 680px,#15225e 1000px,#16225a 1230px,#1e2131 1350px,#1f2129 1400px,#1f2129 1920px);border-top:1px solid #3e4458"></div>
<div style="position:absolute;left:730px;top:1020px;width:329px;height:47.5px;border-radius:24px;background:linear-gradient(90deg,#2c386a,#363d6a 60%,#3a3f66);border:1px solid #4a5282"></div>
<div id="t73" class="t" style="letter-spacing:0.16px;left:784.8px;top:1035.1px;font-size:20px;color:#dcdee8;font-weight:400;">Wyszukaj</div>
<div id="t74" class="t" style="letter-spacing:0.68px;left:1811.0px;top:1023.9px;font-size:16.5px;color:#fff;font-weight:400;">16:22</div>
<div id="t75" class="t" style="letter-spacing:0.52px;left:1767.7px;top:1047.7px;font-size:16.5px;color:#fff;font-weight:400;">28.08.2025</div>
<svg style="position:absolute;left:672px;top:1024px;" width="40" height="40" viewBox="0 0 40 40">
      <defs><linearGradient id="st" x1="0" y1="0" x2="1" y2="1"><stop offset="0" stop-color="#80d4f8"/><stop offset="0.5" stop-color="#3cc0f8"/><stop offset="1" stop-color="#1094f0"/></linearGradient></defs>
      <path d="M3 5 Q3 3 5 3 L19.7 3 L19.7 20 L3 20 Z M21 3 L35.6 3 Q37.9 3 37.9 5 L37.9 20 L21 20 Z M3 21.3 L19.7 21.3 L19.7 38 L5 38 Q3 38 3 36 Z M21 21.3 L37.9 21.3 L37.9 36 Q37.9 38 35.6 38 L21 38 Z" fill="url(#st)"/>
    </svg>
<svg style="position:absolute;left:744px;top:1030px;" width="30" height="30" viewBox="0 0 30 30"><circle cx="13.4" cy="12.3" r="8" stroke="#dcdcdc" stroke-width="2.6" fill="none"/><path d="M19 18 L24.6 23.6" stroke="#dcdcdc" stroke-width="2.6" stroke-linecap="round"/></svg>
<svg style="position:absolute;left:1076px;top:1026px;" width="40" height="38" viewBox="0 0 40 38">
      <defs><linearGradient id="fo" x1="0" y1="0" x2="0.3" y2="1"><stop offset="0" stop-color="#fde07a"/><stop offset="1" stop-color="#f5b61a"/></linearGradient>
      <linearGradient id="dr" x1="0" y1="0" x2="0" y2="1"><stop offset="0" stop-color="#2a8ee0"/><stop offset="1" stop-color="#0f62c0"/></linearGradient></defs>
      <path d="M2 4 Q2 2 4 2 L13 2 L16 5 L36 5 Q38 5 38 7 L38 34.5 L2 34.5 Z" fill="#e0a400"/>
      <path d="M2 8 L14 8 L17 5 L36 5 Q38 5 38 7 L38 34.5 L2 34.5 Z" fill="url(#fo)"/>
      <path d="M8.4 34.5 L8.4 26.5 Q8.4 24 11 24 L29.5 24 Q32 24 32 26.5 L32 34.5 Z" fill="url(#dr)"/>
      <path d="M13.2 28.2 L27 28.2" stroke="#0d4a90" stroke-width="1.2"/>
    </svg>
<div style="position:absolute;left:1092px;top:1068px;width:9px;height:5px;background:#9a9cac;border-radius:3px"></div>
<div style="position:absolute;left:1158px;top:1068px;width:9px;height:5px;background:#9a9cac;border-radius:3px"></div>
<svg style="position:absolute;left:1144px;top:1030px" width="36" height="27.5" viewBox="0 0 24 18.3">
  <defs><linearGradient id="cpbgb" x1="0" y1="0" x2="0" y2="1"><stop offset="0" stop-color="#bfe6fb"/><stop offset="1" stop-color="#8fd0f4"/></linearGradient></defs>
  <rect x="0.5" y="0.5" width="23" height="17" fill="url(#cpbgb)" stroke="#3aa0e6" stroke-width="1"/>
  <path d="M8.2 4.4 A5.6 5.6 0 1 0 13.8 10 L8.2 10 Z" fill="#1a7ed6"/>
  <path d="M8.8 3.8 A5.4 5.4 0 0 1 14.2 9.2 L8.8 9.2 Z" fill="#f28a12"/>
  <path d="M14.2 9 Q15.2 4 17.5 3.6 L18.5 3.6" stroke="#1a6ed0" stroke-width="0.9" fill="none"/>
  <ellipse cx="19.3" cy="3.6" rx="1.7" ry="1.1" fill="#fff" stroke="#1a6ed0" stroke-width="0.7"/>
  <ellipse cx="19.3" cy="7.3" rx="1.7" ry="1.1" fill="#fff" stroke="#1a6ed0" stroke-width="0.7"/>
  <ellipse cx="19.3" cy="11.4" rx="1.7" ry="1.1" fill="#fff" stroke="#1a6ed0" stroke-width="0.7"/>
  <path d="M3 14.6 L11 14.6" stroke="#f28a12" stroke-width="1"/><path d="M11 14.6 L21 14.6" stroke="#1a6ed0" stroke-width="1"/>
</svg>
<svg style="position:absolute;left:1208px;top:1023px;" width="40" height="40" viewBox="0 0 40 40">
      <defs>
        <radialGradient id="ff1" cx="0.75" cy="0.15" r="1.05"><stop offset="0" stop-color="#fff44f"/><stop offset="0.3" stop-color="#ffb030"/><stop offset="0.6" stop-color="#ff5a36"/><stop offset="1" stop-color="#e8207a"/></radialGradient>
        <radialGradient id="ff2" cx="0.55" cy="0.35" r="0.65"><stop offset="0" stop-color="#b060f8"/><stop offset="1" stop-color="#5838d0"/></radialGradient>
      </defs>
      <path d="M20 37.6 C10.5 37.6 3.3 30.5 3.3 21.5 C3.3 15.5 5.8 11.5 9.6 8.4 L11.2 12.3 L13.8 9.8 L16.5 13.4 Q18.2 12.5 19.5 12.2 C20 8 22 5 24.9 3.1 C27 6.5 30 9.5 33.5 11.6 L34.4 10.6 C36 13.5 36.8 17.5 36.8 21.5 C36.8 30.5 29.5 37.6 20 37.6 Z" fill="url(#ff1)"/>
      <circle cx="19.8" cy="20.9" r="7.4" fill="url(#ff2)"/>
      <path d="M8 17.5 Q12 14.5 17 15.5 Q21 16 22 18.5 Q18 17.5 15 19 Q13 20.5 12.5 23 Q10 20 8 17.5 Z" fill="#ffa424"/>
    </svg>
<svg style="position:absolute;left:1586px;top:1032px;" width="28" height="22" viewBox="0 0 28 22"><path d="M6.2 14.4 L13.8 7.2 L21.6 14.4" stroke="#fff" stroke-width="1.6" fill="none" stroke-linecap="round"/></svg>
<svg style="position:absolute;left:1632px;top:1028px;" width="32" height="32" viewBox="0 0 32 32">
      <defs><linearGradient id="stm" x1="0" y1="0" x2="0" y2="1"><stop offset="0" stop-color="#14214a"/><stop offset="0.55" stop-color="#1560a8"/><stop offset="1" stop-color="#1a98e8"/></linearGradient></defs>
      <circle cx="16" cy="16" r="12" fill="url(#stm)"/>
      <circle cx="20.3" cy="11.3" r="4.3" stroke="#fff" stroke-width="2" fill="none"/><circle cx="20.3" cy="11.3" r="1.8" fill="#fff"/>
      <circle cx="12.2" cy="21.3" r="2.8" stroke="#fff" stroke-width="1.7" fill="none"/>
      <path d="M4.3 17.2 L10.5 19.8 M14.3 19.2 L18 14.5" stroke="#fff" stroke-width="2.2" fill="none"/>
    </svg>
<svg style="position:absolute;left:1680px;top:1030px;" width="32" height="26" viewBox="0 0 32 26">
      <path d="M4.4 10 Q16 -1 27.6 10" stroke="#fff" stroke-width="1.7" fill="none" stroke-linecap="round"/>
      <path d="M8.4 14 Q16 6.5 23.6 14" stroke="#fff" stroke-width="1.7" fill="none" stroke-linecap="round"/>
      <path d="M12.3 18 Q16 14.5 19.7 18" stroke="#fff" stroke-width="1.7" fill="none" stroke-linecap="round"/>
      <circle cx="16" cy="21.2" r="1.6" fill="#fff"/>
    </svg>
<svg style="position:absolute;left:1716px;top:1030px;" width="32" height="28" viewBox="0 0 32 28">
      <path d="M4.6 10 L8.6 10 L14 5 L14 23 L8.6 18 L4.6 18 Z" stroke="#fff" stroke-width="1.5" fill="none" stroke-linejoin="round"/>
      <path d="M17.5 10.5 Q19.5 14 17.5 17.5 M20.5 8 Q24 14 20.5 20 M23.5 5.5 Q28.5 14 23.5 22.5" stroke="#fff" stroke-width="1.5" fill="none" stroke-linecap="round"/>
    </svg>
<svg style="position:absolute;left:1864px;top:1028px;" width="28" height="30" viewBox="0 0 28 30">
      <path d="M5 21.5 L23 21.5 Q21 19 21 15 L21 11 Q21 5 14 4.8 Q7 5 7 11 L7 15 Q7 19 5 21.5 Z" stroke="#fff" stroke-width="1.5" fill="none" stroke-linejoin="round"/>
      <path d="M11.5 23.5 Q14 26.5 16.5 23.5" stroke="#fff" stroke-width="1.5" fill="none"/>
    </svg></body></html>
